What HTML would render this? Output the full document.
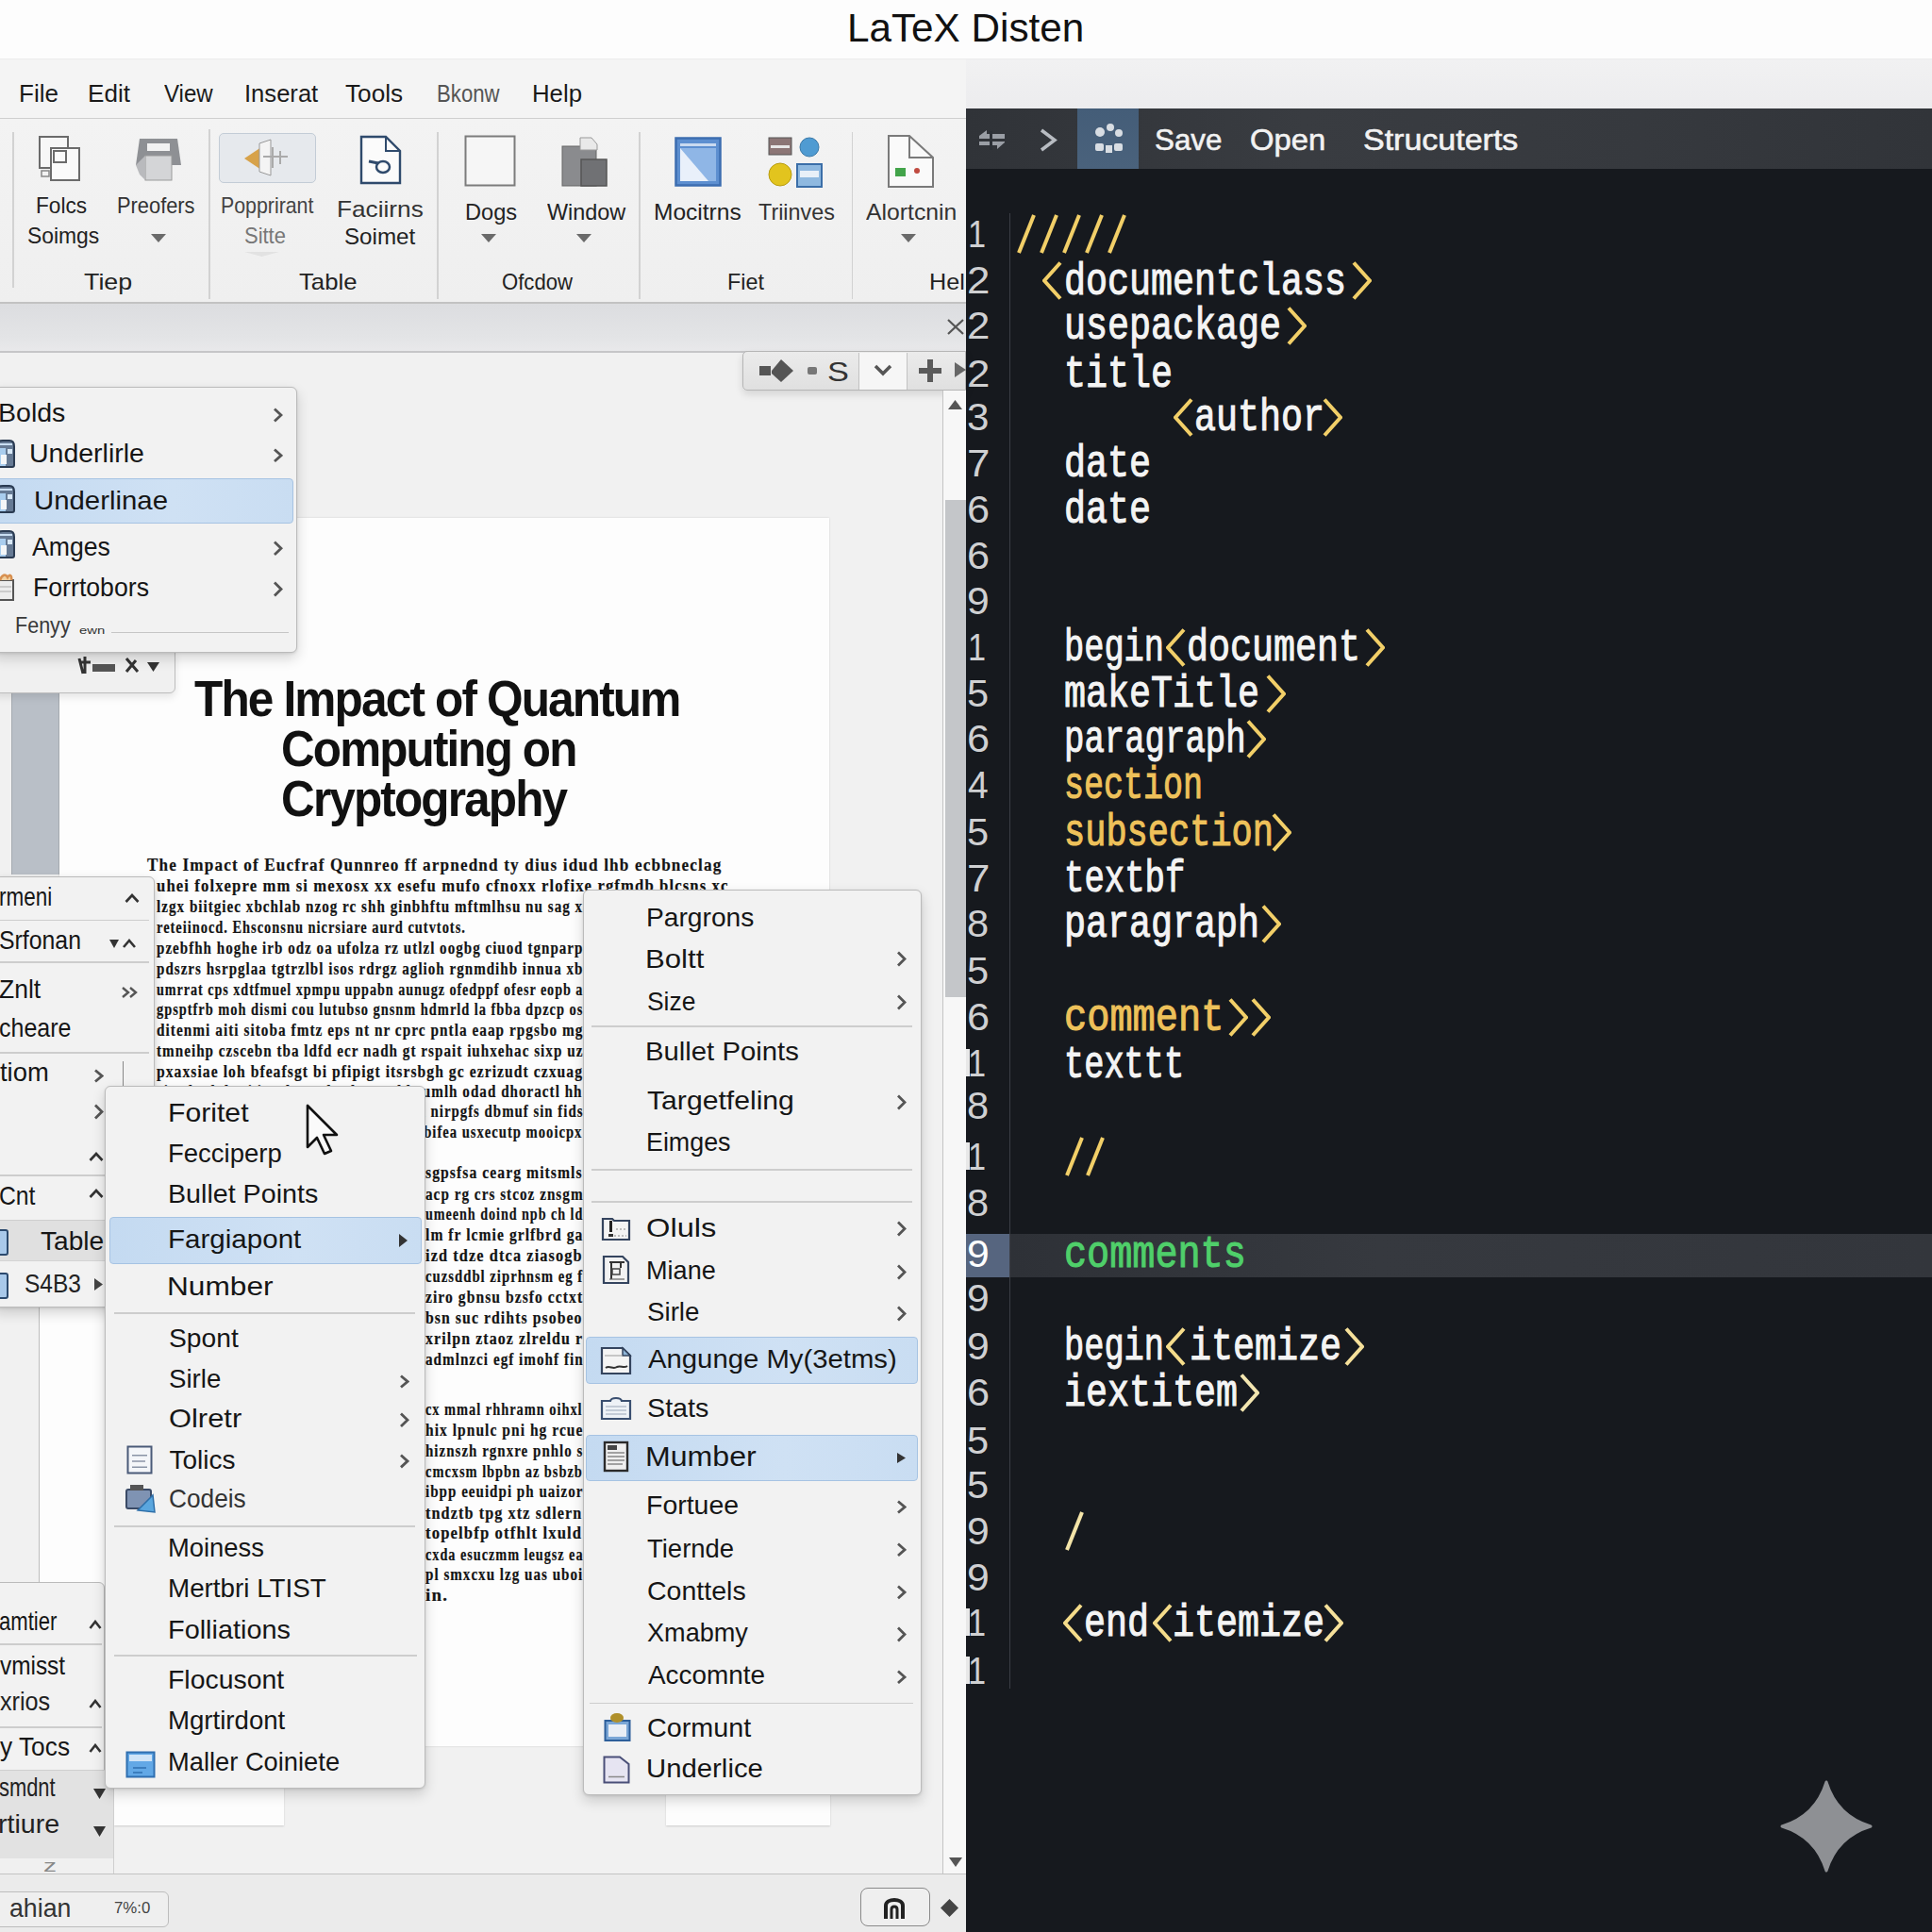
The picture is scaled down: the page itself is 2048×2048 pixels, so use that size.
<!DOCTYPE html>
<html><head><meta charset="utf-8"><title>LaTeX Disten</title>
<style>
html,body{margin:0;padding:0;}
body{width:2048px;height:2048px;position:relative;overflow:hidden;background:#efefef;font-family:"Liberation Sans",sans-serif;}
.t{position:absolute;white-space:pre;line-height:1;}
.r{position:absolute;display:block;}
</style></head><body>
<div class="r" style="left:0.00px;top:0.00px;width:2048.00px;height:63.00px;background:#fdfdfd;"></div>
<div class="r" style="left:0.00px;top:62.00px;width:2048.00px;height:1.00px;background:#ececec;"></div>
<div class="r" style="left:1024.00px;top:63.00px;width:1024.00px;height:52.00px;background:linear-gradient(#f1f1f2,#ececee);"></div>
<div class="r" style="left:0.00px;top:63.00px;width:1024.00px;height:62.00px;background:#f4f4f4;"></div>
<div class="r" style="left:0.00px;top:125.00px;width:1024.00px;height:1.00px;background:#cfcfcf;"></div>
<div class="r" style="left:0.00px;top:126.00px;width:1024.00px;height:195.00px;background:linear-gradient(#f3f3f3,#efefef);"></div>
<div class="r" style="left:0.00px;top:320.00px;width:1024.00px;height:2.00px;background:#c2c2c2;"></div>
<div class="r" style="left:0.00px;top:322.00px;width:1024.00px;height:51.00px;background:linear-gradient(#dcdde0,#e3e4e6 70%,#e9e9eb);"></div>
<div class="r" style="left:0.00px;top:372.00px;width:1024.00px;height:2.00px;background:#c6c6c8;"></div>
<div class="r" style="left:0.00px;top:374.00px;width:1000.00px;height:1612.00px;background:#f1f1f1;"></div>
<div class="t" style="left:898.33px;top:9.44px;font-family:'Liberation Sans',sans-serif;font-size:42.00px;color:#111;transform:scale(1.0057,1.0000);transform-origin:0 35.56px;">LaTeX Disten</div>
<div class="t" style="left:20.42px;top:87.23px;font-family:'Liberation Sans',sans-serif;font-size:25.00px;color:#1a1a1a;transform:scale(1.0400,1.0000);transform-origin:0 21.17px;">File</div>
<div class="t" style="left:93.32px;top:87.23px;font-family:'Liberation Sans',sans-serif;font-size:25.00px;color:#1a1a1a;transform:scale(1.0424,1.0000);transform-origin:0 21.17px;">Edit</div>
<div class="t" style="left:173.60px;top:87.23px;font-family:'Liberation Sans',sans-serif;font-size:25.00px;color:#1a1a1a;transform:scale(0.9630,1.0000);transform-origin:0 21.17px;">View</div>
<div class="t" style="left:258.70px;top:87.23px;font-family:'Liberation Sans',sans-serif;font-size:25.00px;color:#1a1a1a;transform:scale(1.0236,1.0000);transform-origin:0 21.17px;">Inserat</div>
<div class="t" style="left:366.48px;top:87.23px;font-family:'Liberation Sans',sans-serif;font-size:25.00px;color:#1a1a1a;transform:scale(1.0474,1.0000);transform-origin:0 21.17px;">Tools</div>
<div class="t" style="left:463.23px;top:87.23px;font-family:'Liberation Sans',sans-serif;font-size:25.00px;color:#555;transform:scale(0.8874,1.0000);transform-origin:0 21.17px;">Bkonw</div>
<div class="t" style="left:563.94px;top:87.23px;font-family:'Liberation Sans',sans-serif;font-size:25.00px;color:#1a1a1a;transform:scale(1.0309,1.0000);transform-origin:0 21.17px;">Help</div>
<div class="r" style="left:13.00px;top:140.00px;width:1.50px;height:165.00px;background:#d2d2d2;"></div>
<div class="r" style="left:221.00px;top:137.00px;width:1.50px;height:180.00px;background:#d2d2d2;"></div>
<div class="r" style="left:463.00px;top:140.00px;width:1.50px;height:177.00px;background:#d2d2d2;"></div>
<div class="r" style="left:677.00px;top:140.00px;width:1.50px;height:177.00px;background:#d2d2d2;"></div>
<div class="r" style="left:902.50px;top:140.00px;width:1.50px;height:177.00px;background:#d2d2d2;"></div>
<div class="t" style="left:38.15px;top:206.28px;font-family:'Liberation Sans',sans-serif;font-size:24.00px;color:#222;transform:scale(0.9425,1.0000);transform-origin:0 20.32px;">Folcs</div>
<div class="t" style="left:28.75px;top:238.08px;font-family:'Liberation Sans',sans-serif;font-size:24.00px;color:#222;transform:scale(0.9521,1.0000);transform-origin:0 20.32px;">Soimgs</div>
<div class="t" style="left:124.31px;top:206.28px;font-family:'Liberation Sans',sans-serif;font-size:24.00px;color:#333;transform:scale(0.9099,1.0000);transform-origin:0 20.32px;">Preofers</div>
<div class="t" style="left:233.85px;top:206.28px;font-family:'Liberation Sans',sans-serif;font-size:24.00px;color:#444;transform:scale(0.8883,1.0000);transform-origin:0 20.32px;">Popprirant</div>
<div class="t" style="left:258.79px;top:237.68px;font-family:'Liberation Sans',sans-serif;font-size:24.00px;color:#777;transform:scale(0.9146,1.0000);transform-origin:0 20.32px;">Sitte</div>
<div class="t" style="left:357.09px;top:210.28px;font-family:'Liberation Sans',sans-serif;font-size:24.00px;color:#333;transform:scale(1.0920,1.0000);transform-origin:0 20.32px;">Faciirns</div>
<div class="t" style="left:364.99px;top:239.38px;font-family:'Liberation Sans',sans-serif;font-size:24.00px;color:#222;transform:scale(1.0068,1.0000);transform-origin:0 20.32px;">Soimet</div>
<div class="t" style="left:492.68px;top:212.68px;font-family:'Liberation Sans',sans-serif;font-size:24.00px;color:#222;transform:scale(0.9832,1.0000);transform-origin:0 20.32px;">Dogs</div>
<div class="t" style="left:579.60px;top:212.68px;font-family:'Liberation Sans',sans-serif;font-size:24.00px;color:#222;transform:scale(0.9754,1.0000);transform-origin:0 20.32px;">Window</div>
<div class="t" style="left:692.51px;top:212.68px;font-family:'Liberation Sans',sans-serif;font-size:24.00px;color:#222;transform:scale(1.0221,1.0000);transform-origin:0 20.32px;">Mocitrns</div>
<div class="t" style="left:804.41px;top:212.68px;font-family:'Liberation Sans',sans-serif;font-size:24.00px;color:#333;transform:scale(0.9725,1.0000);transform-origin:0 20.32px;">Triinves</div>
<div class="t" style="left:917.50px;top:212.68px;font-family:'Liberation Sans',sans-serif;font-size:24.00px;color:#333;transform:scale(1.0315,1.0000);transform-origin:0 20.32px;">Alortcnin</div>
<div class="t" style="left:89.44px;top:287.08px;font-family:'Liberation Sans',sans-serif;font-size:24.00px;color:#222;transform:scale(1.1169,1.0000);transform-origin:0 20.32px;">Tiep</div>
<div class="t" style="left:317.46px;top:287.08px;font-family:'Liberation Sans',sans-serif;font-size:24.00px;color:#222;transform:scale(1.0714,1.0000);transform-origin:0 20.32px;">Table</div>
<div class="t" style="left:532.28px;top:287.08px;font-family:'Liberation Sans',sans-serif;font-size:24.00px;color:#222;transform:scale(0.9217,1.0000);transform-origin:0 20.32px;">Ofcdow</div>
<div class="t" style="left:771.30px;top:287.08px;font-family:'Liberation Sans',sans-serif;font-size:24.00px;color:#222;transform:scale(0.9737,1.0000);transform-origin:0 20.32px;">Fiet</div>
<div class="t" style="left:984.57px;top:287.08px;font-family:'Liberation Sans',sans-serif;font-size:24.00px;color:#222;transform:scale(1.0481,1.0000);transform-origin:0 20.32px;">Help</div>
<svg class="r" style="left:159.50px;top:248.00px;" width="16.00" height="9.00" viewBox="0 0 16 9" preserveAspectRatio="none"><polygon points="0,0 16,0 8,9" fill="#6a6a6a"/></svg>
<svg class="r" style="left:510.00px;top:248.00px;" width="16.00" height="9.00" viewBox="0 0 16 9" preserveAspectRatio="none"><polygon points="0,0 16,0 8,9" fill="#6a6a6a"/></svg>
<svg class="r" style="left:611.00px;top:248.00px;" width="16.00" height="9.00" viewBox="0 0 16 9" preserveAspectRatio="none"><polygon points="0,0 16,0 8,9" fill="#6a6a6a"/></svg>
<svg class="r" style="left:955.00px;top:248.00px;" width="16.00" height="9.00" viewBox="0 0 16 9" preserveAspectRatio="none"><polygon points="0,0 16,0 8,9" fill="#6a6a6a"/></svg>
<svg class="r" style="left:259.00px;top:267.00px;" width="37.00" height="5.00" viewBox="0 0 37 5" preserveAspectRatio="none"><polygon points="0,0 37,0 18.5,5" fill="#e2e2e2"/></svg>
<svg class="r" style="left:1004.00px;top:338.00px;" width="18.00" height="17.00" viewBox="0 0 18 17" preserveAspectRatio="none"><path d="M1,1 L17,16 M17,1 L1,16" stroke="#555" stroke-width="2.2"/></svg>
<div class="r" style="left:1024.00px;top:115.00px;width:1024.00px;height:1933.00px;background:#16191e;"></div>
<div class="r" style="left:1024.00px;top:115.00px;width:1024.00px;height:64.00px;background:linear-gradient(90deg,#303338,#393c41 35%,#36393e 70%,#313439);"></div>
<div class="r" style="left:1142.00px;top:115.00px;width:65.00px;height:64.00px;background:linear-gradient(#445d78,#4a627c);"></div>
<div class="t" style="left:1223.78px;top:131.91px;font-family:'Liberation Sans',sans-serif;font-size:32.00px;color:#f2f2f2;transform:scale(0.9787,1.0000);transform-origin:0 27.09px;-webkit-text-stroke:0.6px #f2f2f2;">Save</div>
<div class="t" style="left:1324.96px;top:131.91px;font-family:'Liberation Sans',sans-serif;font-size:32.00px;color:#f2f2f2;transform:scale(1.0234,1.0000);transform-origin:0 27.09px;-webkit-text-stroke:0.6px #f2f2f2;">Open</div>
<div class="t" style="left:1445.27px;top:131.91px;font-family:'Liberation Sans',sans-serif;font-size:32.00px;color:#f2f2f2;transform:scale(1.0623,1.0000);transform-origin:0 27.09px;-webkit-text-stroke:0.6px #f2f2f2;">Strucuterts</div>
<div class="r" style="left:1024.00px;top:1308.00px;width:46.00px;height:46.00px;background:#56657f;"></div>
<div class="r" style="left:1070.00px;top:1308.00px;width:978.00px;height:46.00px;background:linear-gradient(90deg,#2e3137,#36393f 40%,#33363c);"></div>
<div class="r" style="left:1069.50px;top:226.00px;width:1.50px;height:1564.00px;background:#3b3e45;"></div>
<div class="t" style="left:1026.43px;top:228.43px;font-family:'Liberation Sans',sans-serif;font-size:40.00px;color:#cfd0d2;transform:scale(0.8571,1.0000);transform-origin:0 33.87px;">1</div>
<div class="t" style="left:1024.81px;top:277.43px;font-family:'Liberation Sans',sans-serif;font-size:40.00px;color:#cfd0d2;transform:scale(1.0959,1.0000);transform-origin:0 33.87px;">2</div>
<div class="t" style="left:1024.81px;top:325.13px;font-family:'Liberation Sans',sans-serif;font-size:40.00px;color:#cfd0d2;transform:scale(1.0959,1.0000);transform-origin:0 33.87px;">2</div>
<div class="t" style="left:1024.81px;top:375.53px;font-family:'Liberation Sans',sans-serif;font-size:40.00px;color:#cfd0d2;transform:scale(1.0959,1.0000);transform-origin:0 33.87px;">2</div>
<div class="t" style="left:1025.42px;top:421.93px;font-family:'Liberation Sans',sans-serif;font-size:40.00px;color:#cfd0d2;transform:scale(1.0526,1.0000);transform-origin:0 33.87px;">3</div>
<div class="t" style="left:1024.81px;top:470.93px;font-family:'Liberation Sans',sans-serif;font-size:40.00px;color:#cfd0d2;transform:scale(1.0959,1.0000);transform-origin:0 33.87px;">7</div>
<div class="t" style="left:1024.84px;top:519.93px;font-family:'Liberation Sans',sans-serif;font-size:40.00px;color:#cfd0d2;transform:scale(1.0811,1.0000);transform-origin:0 33.87px;">6</div>
<div class="t" style="left:1024.84px;top:569.03px;font-family:'Liberation Sans',sans-serif;font-size:40.00px;color:#cfd0d2;transform:scale(1.0811,1.0000);transform-origin:0 33.87px;">6</div>
<div class="t" style="left:1025.13px;top:616.73px;font-family:'Liberation Sans',sans-serif;font-size:40.00px;color:#cfd0d2;transform:scale(1.0667,1.0000);transform-origin:0 33.87px;">9</div>
<div class="t" style="left:1026.43px;top:665.73px;font-family:'Liberation Sans',sans-serif;font-size:40.00px;color:#cfd0d2;transform:scale(0.8571,1.0000);transform-origin:0 33.87px;">1</div>
<div class="t" style="left:1025.44px;top:715.13px;font-family:'Liberation Sans',sans-serif;font-size:40.00px;color:#cfd0d2;transform:scale(1.0390,1.0000);transform-origin:0 33.87px;">5</div>
<div class="t" style="left:1024.84px;top:762.83px;font-family:'Liberation Sans',sans-serif;font-size:40.00px;color:#cfd0d2;transform:scale(1.0811,1.0000);transform-origin:0 33.87px;">6</div>
<div class="t" style="left:1026.27px;top:811.93px;font-family:'Liberation Sans',sans-serif;font-size:40.00px;color:#cfd0d2;transform:scale(0.9756,1.0000);transform-origin:0 33.87px;">4</div>
<div class="t" style="left:1025.44px;top:862.13px;font-family:'Liberation Sans',sans-serif;font-size:40.00px;color:#cfd0d2;transform:scale(1.0390,1.0000);transform-origin:0 33.87px;">5</div>
<div class="t" style="left:1024.81px;top:911.13px;font-family:'Liberation Sans',sans-serif;font-size:40.00px;color:#cfd0d2;transform:scale(1.0959,1.0000);transform-origin:0 33.87px;">7</div>
<div class="t" style="left:1025.44px;top:959.13px;font-family:'Liberation Sans',sans-serif;font-size:40.00px;color:#cfd0d2;transform:scale(1.0390,1.0000);transform-origin:0 33.87px;">8</div>
<div class="t" style="left:1025.44px;top:1009.13px;font-family:'Liberation Sans',sans-serif;font-size:40.00px;color:#cfd0d2;transform:scale(1.0390,1.0000);transform-origin:0 33.87px;">5</div>
<div class="t" style="left:1024.84px;top:1058.13px;font-family:'Liberation Sans',sans-serif;font-size:40.00px;color:#cfd0d2;transform:scale(1.0811,1.0000);transform-origin:0 33.87px;">6</div>
<div class="t" style="left:1026.43px;top:1107.43px;font-family:'Liberation Sans',sans-serif;font-size:40.00px;color:#cfd0d2;transform:scale(0.8571,1.0000);transform-origin:0 33.87px;">1</div>
<div class="t" style="left:1025.44px;top:1152.13px;font-family:'Liberation Sans',sans-serif;font-size:40.00px;color:#cfd0d2;transform:scale(1.0390,1.0000);transform-origin:0 33.87px;">8</div>
<div class="t" style="left:1026.43px;top:1205.93px;font-family:'Liberation Sans',sans-serif;font-size:40.00px;color:#cfd0d2;transform:scale(0.8571,1.0000);transform-origin:0 33.87px;">1</div>
<div class="t" style="left:1025.44px;top:1254.93px;font-family:'Liberation Sans',sans-serif;font-size:40.00px;color:#cfd0d2;transform:scale(1.0390,1.0000);transform-origin:0 33.87px;">8</div>
<div class="t" style="left:1025.13px;top:1309.13px;font-family:'Liberation Sans',sans-serif;font-size:40.00px;color:#ffffff;transform:scale(1.0667,1.0000);transform-origin:0 33.87px;">9</div>
<div class="t" style="left:1025.13px;top:1355.63px;font-family:'Liberation Sans',sans-serif;font-size:40.00px;color:#cfd0d2;transform:scale(1.0667,1.0000);transform-origin:0 33.87px;">9</div>
<div class="t" style="left:1025.13px;top:1407.13px;font-family:'Liberation Sans',sans-serif;font-size:40.00px;color:#cfd0d2;transform:scale(1.0667,1.0000);transform-origin:0 33.87px;">9</div>
<div class="t" style="left:1024.84px;top:1456.13px;font-family:'Liberation Sans',sans-serif;font-size:40.00px;color:#cfd0d2;transform:scale(1.0811,1.0000);transform-origin:0 33.87px;">6</div>
<div class="t" style="left:1025.44px;top:1506.73px;font-family:'Liberation Sans',sans-serif;font-size:40.00px;color:#cfd0d2;transform:scale(1.0390,1.0000);transform-origin:0 33.87px;">5</div>
<div class="t" style="left:1025.44px;top:1554.13px;font-family:'Liberation Sans',sans-serif;font-size:40.00px;color:#cfd0d2;transform:scale(1.0390,1.0000);transform-origin:0 33.87px;">5</div>
<div class="t" style="left:1025.13px;top:1603.13px;font-family:'Liberation Sans',sans-serif;font-size:40.00px;color:#cfd0d2;transform:scale(1.0667,1.0000);transform-origin:0 33.87px;">9</div>
<div class="t" style="left:1025.13px;top:1652.13px;font-family:'Liberation Sans',sans-serif;font-size:40.00px;color:#cfd0d2;transform:scale(1.0667,1.0000);transform-origin:0 33.87px;">9</div>
<div class="t" style="left:1026.43px;top:1700.13px;font-family:'Liberation Sans',sans-serif;font-size:40.00px;color:#cfd0d2;transform:scale(0.8571,1.0000);transform-origin:0 33.87px;">1</div>
<div class="t" style="left:1026.43px;top:1750.63px;font-family:'Liberation Sans',sans-serif;font-size:40.00px;color:#cfd0d2;transform:scale(0.8571,1.0000);transform-origin:0 33.87px;">1</div>
<div class="r" style="left:1024.00px;top:1112.30px;width:3.50px;height:29.00px;background:#e8e8e8;"></div>
<div class="r" style="left:1024.00px;top:1210.80px;width:3.50px;height:29.00px;background:#e8e8e8;"></div>
<div class="r" style="left:1024.00px;top:1705.00px;width:3.50px;height:29.00px;background:#e8e8e8;"></div>
<div class="r" style="left:1024.00px;top:1755.50px;width:3.50px;height:29.00px;background:#e8e8e8;"></div>
<svg class="r" style="left:1078.00px;top:227.30px;" width="20.00" height="42.00" viewBox="0 0 20 42" preserveAspectRatio="none"><line x1="18" y1="1" x2="2" y2="41" stroke="#f2cf68" stroke-width="4"/></svg><svg class="r" style="left:1101.90px;top:227.30px;" width="20.00" height="42.00" viewBox="0 0 20 42" preserveAspectRatio="none"><line x1="18" y1="1" x2="2" y2="41" stroke="#f2cf68" stroke-width="4"/></svg><svg class="r" style="left:1125.80px;top:227.30px;" width="20.00" height="42.00" viewBox="0 0 20 42" preserveAspectRatio="none"><line x1="18" y1="1" x2="2" y2="41" stroke="#f2cf68" stroke-width="4"/></svg><svg class="r" style="left:1149.70px;top:227.30px;" width="20.00" height="42.00" viewBox="0 0 20 42" preserveAspectRatio="none"><line x1="18" y1="1" x2="2" y2="41" stroke="#f2cf68" stroke-width="4"/></svg><svg class="r" style="left:1173.60px;top:227.30px;" width="20.00" height="42.00" viewBox="0 0 20 42" preserveAspectRatio="none"><line x1="18" y1="1" x2="2" y2="41" stroke="#f2cf68" stroke-width="4"/></svg>
<svg class="r" style="left:1105.00px;top:277.30px;" width="21.00" height="41.00" viewBox="0 0 21 41" preserveAspectRatio="none"><polyline points="19.0,1.5 2,20.5 19.0,39.5" fill="none" stroke="#f2cf68" stroke-width="4" stroke-linejoin="miter" stroke-linecap="butt"/></svg>
<div class="t" style="left:1128.00px;top:274.53px;font-family:'Liberation Mono',monospace;font-size:48.0px;color:#f4f4f4;-webkit-text-stroke:1.1px #f4f4f4;transform:scaleX(0.7986);transform-origin:0 0;">documentclass</div>
<svg class="r" style="left:1433.00px;top:277.30px;" width="21.00" height="41.00" viewBox="0 0 21 41" preserveAspectRatio="none"><polyline points="2,1.5 19.0,20.5 2,39.5" fill="none" stroke="#f2cf68" stroke-width="4" stroke-linejoin="miter"/></svg>
<div class="t" style="left:1128.00px;top:322.23px;font-family:'Liberation Mono',monospace;font-size:48.0px;color:#f4f4f4;-webkit-text-stroke:1.1px #f4f4f4;transform:scaleX(0.7986);transform-origin:0 0;">usepackage</div>
<svg class="r" style="left:1364.00px;top:325.00px;" width="21.00" height="41.00" viewBox="0 0 21 41" preserveAspectRatio="none"><polyline points="2,1.5 19.0,20.5 2,39.5" fill="none" stroke="#f2cf68" stroke-width="4" stroke-linejoin="miter"/></svg>
<div class="t" style="left:1128.00px;top:372.63px;font-family:'Liberation Mono',monospace;font-size:48.0px;color:#f4f4f4;-webkit-text-stroke:1.1px #f4f4f4;transform:scaleX(0.7986);transform-origin:0 0;">title</div>
<svg class="r" style="left:1244.00px;top:421.80px;" width="21.00" height="41.00" viewBox="0 0 21 41" preserveAspectRatio="none"><polyline points="19.0,1.5 2,20.5 19.0,39.5" fill="none" stroke="#f2cf68" stroke-width="4" stroke-linejoin="miter" stroke-linecap="butt"/></svg>
<div class="t" style="left:1266.00px;top:419.03px;font-family:'Liberation Mono',monospace;font-size:48.0px;color:#f4f4f4;-webkit-text-stroke:1.1px #f4f4f4;transform:scaleX(0.7986);transform-origin:0 0;">author</div>
<svg class="r" style="left:1402.00px;top:421.80px;" width="21.00" height="41.00" viewBox="0 0 21 41" preserveAspectRatio="none"><polyline points="2,1.5 19.0,20.5 2,39.5" fill="none" stroke="#f2cf68" stroke-width="4" stroke-linejoin="miter"/></svg>
<div class="t" style="left:1128.00px;top:468.03px;font-family:'Liberation Mono',monospace;font-size:48.0px;color:#f4f4f4;-webkit-text-stroke:1.1px #f4f4f4;transform:scaleX(0.7986);transform-origin:0 0;">date</div>
<div class="t" style="left:1128.00px;top:517.03px;font-family:'Liberation Mono',monospace;font-size:48.0px;color:#f4f4f4;-webkit-text-stroke:1.1px #f4f4f4;transform:scaleX(0.7986);transform-origin:0 0;">date</div>
<div class="t" style="left:1128.00px;top:662.83px;font-family:'Liberation Mono',monospace;font-size:48.0px;color:#f4f4f4;-webkit-text-stroke:1.1px #f4f4f4;transform:scaleX(0.7361);transform-origin:0 0;">begin</div>
<svg class="r" style="left:1236.00px;top:665.60px;" width="21.00" height="41.00" viewBox="0 0 21 41" preserveAspectRatio="none"><polyline points="19.0,1.5 2,20.5 19.0,39.5" fill="none" stroke="#f2cf68" stroke-width="4" stroke-linejoin="miter" stroke-linecap="butt"/></svg>
<div class="t" style="left:1258.00px;top:662.83px;font-family:'Liberation Mono',monospace;font-size:48.0px;color:#f4f4f4;-webkit-text-stroke:1.1px #f4f4f4;transform:scaleX(0.7986);transform-origin:0 0;">document</div>
<svg class="r" style="left:1447.00px;top:665.60px;" width="21.00" height="41.00" viewBox="0 0 21 41" preserveAspectRatio="none"><polyline points="2,1.5 19.0,20.5 2,39.5" fill="none" stroke="#f2cf68" stroke-width="4" stroke-linejoin="miter"/></svg>
<div class="t" style="left:1128.00px;top:712.23px;font-family:'Liberation Mono',monospace;font-size:48.0px;color:#f4f4f4;-webkit-text-stroke:1.1px #f4f4f4;transform:scaleX(0.7986);transform-origin:0 0;">makeTitle</div>
<svg class="r" style="left:1342.00px;top:715.00px;" width="21.00" height="41.00" viewBox="0 0 21 41" preserveAspectRatio="none"><polyline points="2,1.5 19.0,20.5 2,39.5" fill="none" stroke="#f2cf68" stroke-width="4" stroke-linejoin="miter"/></svg>
<div class="t" style="left:1128.00px;top:759.93px;font-family:'Liberation Mono',monospace;font-size:48.0px;color:#f4f4f4;-webkit-text-stroke:1.1px #f4f4f4;transform:scaleX(0.7431);transform-origin:0 0;">paragraph</div>
<svg class="r" style="left:1321.00px;top:762.70px;" width="21.00" height="41.00" viewBox="0 0 21 41" preserveAspectRatio="none"><polyline points="2,1.5 19.0,20.5 2,39.5" fill="none" stroke="#f2cf68" stroke-width="4" stroke-linejoin="miter"/></svg>
<div class="t" style="left:1128.00px;top:809.03px;font-family:'Liberation Mono',monospace;font-size:48.0px;color:#eec15a;-webkit-text-stroke:1.1px #eec15a;transform:scaleX(0.7292);transform-origin:0 0;">section</div>
<div class="t" style="left:1128.00px;top:859.23px;font-family:'Liberation Mono',monospace;font-size:48.0px;color:#eec15a;-webkit-text-stroke:1.1px #eec15a;transform:scaleX(0.7708);transform-origin:0 0;">subsection</div>
<svg class="r" style="left:1348.00px;top:862.00px;" width="21.00" height="41.00" viewBox="0 0 21 41" preserveAspectRatio="none"><polyline points="2,1.5 19.0,20.5 2,39.5" fill="none" stroke="#f2cf68" stroke-width="4" stroke-linejoin="miter"/></svg>
<div class="t" style="left:1128.00px;top:908.23px;font-family:'Liberation Mono',monospace;font-size:48.0px;color:#f4f4f4;-webkit-text-stroke:1.1px #f4f4f4;transform:scaleX(0.7431);transform-origin:0 0;">textbf</div>
<div class="t" style="left:1128.00px;top:956.23px;font-family:'Liberation Mono',monospace;font-size:48.0px;color:#f4f4f4;-webkit-text-stroke:1.1px #f4f4f4;transform:scaleX(0.7986);transform-origin:0 0;">paragraph</div>
<svg class="r" style="left:1337.00px;top:959.00px;" width="21.00" height="41.00" viewBox="0 0 21 41" preserveAspectRatio="none"><polyline points="2,1.5 19.0,20.5 2,39.5" fill="none" stroke="#f2cf68" stroke-width="4" stroke-linejoin="miter"/></svg>
<div class="t" style="left:1128.00px;top:1055.23px;font-family:'Liberation Mono',monospace;font-size:48.0px;color:#eec15a;-webkit-text-stroke:1.1px #eec15a;transform:scaleX(0.8403);transform-origin:0 0;">comment</div>
<svg class="r" style="left:1302.00px;top:1058.00px;" width="21.00" height="41.00" viewBox="0 0 21 41" preserveAspectRatio="none"><polyline points="2,1.5 19.0,20.5 2,39.5" fill="none" stroke="#f2cf68" stroke-width="4" stroke-linejoin="miter"/></svg>
<svg class="r" style="left:1326.00px;top:1058.00px;" width="21.00" height="41.00" viewBox="0 0 21 41" preserveAspectRatio="none"><polyline points="2,1.5 19.0,20.5 2,39.5" fill="none" stroke="#f2cf68" stroke-width="4" stroke-linejoin="miter"/></svg>
<div class="t" style="left:1128.00px;top:1104.53px;font-family:'Liberation Mono',monospace;font-size:48.0px;color:#f4f4f4;-webkit-text-stroke:1.1px #f4f4f4;transform:scaleX(0.7361);transform-origin:0 0;">texttt</div>
<svg class="r" style="left:1129.00px;top:1204.80px;" width="20.00" height="42.00" viewBox="0 0 20 42" preserveAspectRatio="none"><line x1="18" y1="1" x2="2" y2="41" stroke="#f2cf68" stroke-width="4"/></svg><svg class="r" style="left:1151.00px;top:1204.80px;" width="20.00" height="42.00" viewBox="0 0 20 42" preserveAspectRatio="none"><line x1="18" y1="1" x2="2" y2="41" stroke="#f2cf68" stroke-width="4"/></svg>
<div class="t" style="left:1128.00px;top:1306.23px;font-family:'Liberation Mono',monospace;font-size:48.0px;color:#4fcf6a;-webkit-text-stroke:1.1px #4fcf6a;transform:scaleX(0.8368);transform-origin:0 0;">comments</div>
<div class="t" style="left:1128.00px;top:1404.23px;font-family:'Liberation Mono',monospace;font-size:48.0px;color:#f4f4f4;-webkit-text-stroke:1.1px #f4f4f4;transform:scaleX(0.7361);transform-origin:0 0;">begin</div>
<svg class="r" style="left:1236.00px;top:1407.00px;" width="21.00" height="41.00" viewBox="0 0 21 41" preserveAspectRatio="none"><polyline points="19.0,1.5 2,20.5 19.0,39.5" fill="none" stroke="#f5dc8a" stroke-width="4" stroke-linejoin="miter" stroke-linecap="butt"/></svg>
<div class="t" style="left:1261.00px;top:1404.23px;font-family:'Liberation Mono',monospace;font-size:48.0px;color:#f4f4f4;-webkit-text-stroke:1.1px #f4f4f4;transform:scaleX(0.7986);transform-origin:0 0;">itemize</div>
<svg class="r" style="left:1425.00px;top:1407.00px;" width="21.00" height="41.00" viewBox="0 0 21 41" preserveAspectRatio="none"><polyline points="2,1.5 19.0,20.5 2,39.5" fill="none" stroke="#f5e09a" stroke-width="4" stroke-linejoin="miter"/></svg>
<div class="t" style="left:1128.00px;top:1453.23px;font-family:'Liberation Mono',monospace;font-size:48.0px;color:#f4f4f4;-webkit-text-stroke:1.1px #f4f4f4;transform:scaleX(0.7986);transform-origin:0 0;">iextitem</div>
<svg class="r" style="left:1314.00px;top:1456.00px;" width="21.00" height="41.00" viewBox="0 0 21 41" preserveAspectRatio="none"><polyline points="2,1.5 19.0,20.5 2,39.5" fill="none" stroke="#f3e6b0" stroke-width="4" stroke-linejoin="miter"/></svg>
<svg class="r" style="left:1129.00px;top:1602.00px;" width="20.00" height="42.00" viewBox="0 0 20 42" preserveAspectRatio="none"><line x1="18" y1="1" x2="2" y2="41" stroke="#f4e4a8" stroke-width="4"/></svg>
<svg class="r" style="left:1127.00px;top:1700.00px;" width="21.00" height="41.00" viewBox="0 0 21 41" preserveAspectRatio="none"><polyline points="19.0,1.5 2,20.5 19.0,39.5" fill="none" stroke="#f5dc8a" stroke-width="4" stroke-linejoin="miter" stroke-linecap="butt"/></svg>
<div class="t" style="left:1149.00px;top:1697.23px;font-family:'Liberation Mono',monospace;font-size:48.0px;color:#f4f4f4;-webkit-text-stroke:1.1px #f4f4f4;transform:scaleX(0.7986);transform-origin:0 0;">end</div>
<svg class="r" style="left:1222.00px;top:1700.00px;" width="21.00" height="41.00" viewBox="0 0 21 41" preserveAspectRatio="none"><polyline points="19.0,1.5 2,20.5 19.0,39.5" fill="none" stroke="#f5dc8a" stroke-width="4" stroke-linejoin="miter" stroke-linecap="butt"/></svg>
<div class="t" style="left:1243.00px;top:1697.23px;font-family:'Liberation Mono',monospace;font-size:48.0px;color:#f4f4f4;-webkit-text-stroke:1.1px #f4f4f4;transform:scaleX(0.7986);transform-origin:0 0;">itemize</div>
<svg class="r" style="left:1403.00px;top:1700.00px;" width="21.00" height="41.00" viewBox="0 0 21 41" preserveAspectRatio="none"><polyline points="2,1.5 19.0,20.5 2,39.5" fill="none" stroke="#f5e09a" stroke-width="4" stroke-linejoin="miter"/></svg>
<svg class="r" style="left:1886.00px;top:1886.00px;" width="100.00" height="100.00" viewBox="0 0 100 100" preserveAspectRatio="none"><path d="M50,3 Q61,39 97,50 Q61,61 50,97 Q39,61 3,50 Q39,39 50,3 Z" fill="#8e9094" stroke="#8e9094" stroke-width="3" stroke-linejoin="round"/></svg>
<svg class="r" style="left:1036.00px;top:135.00px;" width="31.00" height="27.00" viewBox="0 0 31 27" preserveAspectRatio="none"><g fill="#9a9ea5"><path d="M2,9 L10,3 L10,7 L29,7 L29,12 L2,12 Z"/><path d="M29,16 L21,23 L21,19 L2,19 L2,15 L29,15 Z"/><rect x="13" y="4" width="3" height="20" fill="#2c3036"/></g></svg>
<svg class="r" style="left:1101.00px;top:135.00px;" width="20.00" height="27.00" viewBox="0 0 20 27" preserveAspectRatio="none"><polyline points="3,3 17,13.5 3,24" fill="none" stroke="#b8bcc2" stroke-width="3.5"/></svg>
<svg class="r" style="left:1158.00px;top:130.00px;" width="34.00" height="36.00" viewBox="0 0 34 36" preserveAspectRatio="none"><g fill="#d8dde3"><circle cx="8" cy="10" r="5"/><circle cx="19" cy="5" r="4"/><circle cx="28" cy="11" r="4"/><rect x="3" y="22" width="9" height="8" rx="2"/><rect x="14" y="24" width="7" height="8"/><rect x="23" y="22" width="9" height="8" rx="2"/></g></svg>
<svg class="r" style="left:40.00px;top:143.00px;" width="46.00" height="50.00" viewBox="0 0 46 50" preserveAspectRatio="none"><g fill="none" stroke="#6b6b6b" stroke-width="2"><rect x="2" y="2" width="30" height="33" fill="#f7f7f7"/><rect x="14" y="14" width="30" height="34" fill="#fafafa"/><rect x="17" y="17" width="13" height="12"/></g><rect x="4" y="38" width="8" height="6" fill="none" stroke="#888" stroke-width="1.5"/></svg>
<svg class="r" style="left:142.00px;top:145.00px;" width="52.00" height="47.00" viewBox="0 0 52 47" preserveAspectRatio="none"><path d="M6,2 L46,2 L50,30 L2,30 Z" fill="#8e9094"/><rect x="14" y="7" width="24" height="8" fill="#f2f2f2"/><rect x="12" y="20" width="28" height="26" fill="#d4d5d7" stroke="#9a9a9a" stroke-width="1"/><path d="M2,30 L12,20 L12,46 L6,40 Z" fill="#b9babd"/></svg>
<div class="r" style="left:232.00px;top:140.50px;width:102.50px;height:53.00px;background:#e6e9ed;border:1.5px solid #c3ccd6;border-radius:5px;box-sizing:border-box;"></div>
<svg class="r" style="left:255.00px;top:146.00px;" width="55.00" height="42.00" viewBox="0 0 55 42" preserveAspectRatio="none"><path d="M4,22 L22,10 L22,34 Z" fill="#d7a24a"/><path d="M20,6 L32,2 L32,40 L20,36 Z" fill="#f4f4f4" stroke="#999" stroke-width="1"/><path d="M24,20 L50,20 M34,10 L34,32 M42,14 L42,28" stroke="#aaa" stroke-width="2"/></svg>
<svg class="r" style="left:381.00px;top:143.00px;" width="45.00" height="53.00" viewBox="0 0 45 53" preserveAspectRatio="none"><path d="M2,2 L28,2 L43,17 L43,51 L2,51 Z" fill="#fbfbfb" stroke="#2f4a6c" stroke-width="2.4"/><path d="M28,2 L28,17 L43,17" fill="none" stroke="#2f4a6c" stroke-width="2"/><ellipse cx="25" cy="34" rx="7" ry="6" fill="none" stroke="#2f4a6c" stroke-width="2.5"/><path d="M10,28 L20,30" stroke="#2f4a6c" stroke-width="3"/></svg>
<svg class="r" style="left:492.00px;top:143.00px;" width="55.00" height="55.00" viewBox="0 0 55 55" preserveAspectRatio="none"><rect x="1.5" y="1.5" width="52" height="52" fill="#f6f6f6" stroke="#7c7c7c" stroke-width="2"/></svg>
<svg class="r" style="left:595.00px;top:145.00px;" width="51.00" height="54.00" viewBox="0 0 51 54" preserveAspectRatio="none"><rect x="1" y="10" width="36" height="42" fill="#8a8b8e" stroke="#666" stroke-width="1"/><path d="M20,1 L32,1 L38,8 L38,14 L20,14 Z" fill="#e9e9e9" stroke="#999"/><rect x="21" y="24" width="27" height="28" fill="#707174" stroke="#555" stroke-width="1.5"/></svg>
<svg class="r" style="left:715.00px;top:145.00px;" width="50.00" height="53.00" viewBox="0 0 50 53" preserveAspectRatio="none"><rect x="1.5" y="1.5" width="47" height="50" fill="#5d8fd0" stroke="#3c6db0" stroke-width="2.5"/><rect x="6" y="12" width="38" height="35" fill="#e9f0fa"/><path d="M6,12 L44,12 L44,47 L36,47 Z" fill="#8fb6e6"/><rect x="6" y="7" width="38" height="3" fill="#c9daf0"/></svg>
<svg class="r" style="left:814.00px;top:145.00px;" width="58.00" height="54.00" viewBox="0 0 58 54" preserveAspectRatio="none"><rect x="1" y="1" width="24" height="18" fill="#8c7676" stroke="#555" stroke-width="1"/><rect x="3" y="9" width="20" height="3" fill="#e8e8e8"/><circle cx="44" cy="11" r="10" fill="#4f9bd2" stroke="#3a79a8" stroke-width="1"/><circle cx="13" cy="40" r="12" fill="#e2c41e" stroke="#b89c10" stroke-width="1"/><rect x="31" y="29" width="26" height="24" fill="#8fb9e0" stroke="#3b6ea8" stroke-width="2"/><rect x="34" y="36" width="20" height="7" fill="#e8f0f8"/></svg>
<svg class="r" style="left:940.00px;top:142.00px;" width="51.00" height="58.00" viewBox="0 0 51 58" preserveAspectRatio="none"><path d="M2,2 L24,2 L49,25 L49,56 L2,56 Z" fill="#fafafa" stroke="#7a7a7a" stroke-width="2"/><path d="M24,2 L24,25 L49,25" fill="none" stroke="#7a7a7a" stroke-width="2"/><rect x="9" y="36" width="11" height="9" fill="#42a44a"/><circle cx="32" cy="39" r="3" fill="#c04a40"/></svg>
<div class="r" style="left:786.70px;top:372.00px;width:237.30px;height:42.20px;background:linear-gradient(#ebebeb,#e0e0e0);border:1.5px solid #b5b5b5;border-radius:5px 0 0 5px;box-sizing:border-box;box-shadow:0 4px 8px rgba(0,0,0,0.12);"></div>
<div class="r" style="left:909.50px;top:373.50px;width:50.80px;height:39.20px;background:#f6f6f6;border-left:1.5px solid #c2c2c2;border-right:1.5px solid #c2c2c2;"></div>
<svg class="r" style="left:804.00px;top:380.00px;" width="96.00" height="25.00" viewBox="0 0 96 25" preserveAspectRatio="none"><rect x="1" y="8" width="12" height="10" fill="#555"/><path d="M14,13 L24,1 L37,13 L24,25 L14,16 Z" fill="#555"/><rect x="52" y="9" width="10" height="8" rx="2" fill="#777"/></svg>
<div class="t" style="left:876.57px;top:379.10px;font-family:'Liberation Sans',sans-serif;font-size:30.00px;color:#333;transform:scale(1.1429,1.0000);transform-origin:0 25.40px;">S</div>
<svg class="r" style="left:926.00px;top:385.00px;" width="20.00" height="15.00" viewBox="0 0 20 15" preserveAspectRatio="none"><polyline points="2,3 10,11 18,3" fill="none" stroke="#555" stroke-width="3.5"/></svg>
<svg class="r" style="left:973.00px;top:380.00px;" width="26.00" height="25.00" viewBox="0 0 26 25" preserveAspectRatio="none"><path d="M10,1 H16 V10 H25 V16 H16 V25 H10 V16 H1 V10 H10 Z" fill="#5a5a5a"/></svg>
<svg class="r" style="left:1012.00px;top:382.00px;" width="12.00" height="20.00" viewBox="0 0 12 20" preserveAspectRatio="none"><path d="M0,2 L12,10 L0,18 Z" fill="#666"/></svg>
<div class="r" style="left:63.00px;top:549.00px;width:815.80px;height:1302.00px;background:#fdfdfd;box-shadow:0 0 2px rgba(0,0,0,0.15);"></div>
<div class="r" style="left:120.60px;top:1800.00px;width:180.20px;height:135.00px;background:#fdfdfd;box-shadow:0 1px 2px rgba(0,0,0,0.15);"></div>
<div class="r" style="left:705.50px;top:1800.00px;width:174.10px;height:135.00px;background:#fdfdfd;box-shadow:0 1px 2px rgba(0,0,0,0.15);"></div>
<div class="r" style="left:41.00px;top:1386.00px;width:70.00px;height:291.00px;background:#fdfdfd;border-left:1.5px solid #bdbdbd;"></div>
<div class="r" style="left:11.60px;top:735.00px;width:51.70px;height:192.00px;background:#b9bfc7;border-left:1.5px solid #a5aab0;border-right:1.5px solid #a5aab0;box-sizing:border-box;"></div>
<div class="r" style="left:999.00px;top:414.00px;width:25.00px;height:1572.00px;background:#f7f7f7;border-left:1.5px solid #c4c4c4;box-sizing:border-box;"></div>
<div class="r" style="left:1002.00px;top:530.00px;width:22.00px;height:527.00px;background:#c4c6c9;"></div>
<svg class="r" style="left:1005.00px;top:424.00px;" width="15.00" height="10.00" viewBox="0 0 15 10" preserveAspectRatio="none"><polygon points="0,10 15,10 7.5,0" fill="#555"/></svg>
<svg class="r" style="left:1006.00px;top:1969.00px;" width="14.00" height="10.00" viewBox="0 0 14 10" preserveAspectRatio="none"><polygon points="0,0 14,0 7,10" fill="#555"/></svg>
<div class="r" style="left:0.00px;top:1986.00px;width:1024.00px;height:62.00px;background:#ebebeb;border-top:1.5px solid #c3c3c3;box-sizing:border-box;"></div>
<div class="r" style="left:-6.00px;top:2004.80px;width:185.00px;height:38.20px;background:#efefef;border:1.5px solid #bdbdbd;border-radius:6px;box-sizing:border-box;"></div>
<div class="t" style="left:10.05px;top:2008.89px;font-family:'Liberation Sans',sans-serif;font-size:28.00px;color:#333;transform:scale(0.9545,1.0000);transform-origin:0 23.71px;">ahian</div>
<div class="t" style="left:121.21px;top:2015.45px;font-family:'Liberation Sans',sans-serif;font-size:16.00px;color:#444;transform:scale(1.0496,1.0000);transform-origin:0 13.55px;">7%:0</div>
<div class="r" style="left:911.70px;top:2000.80px;width:73.90px;height:41.20px;background:#efefef;border:1.8px solid #8a8a8a;border-radius:8px;box-sizing:border-box;"></div>
<svg class="r" style="left:934.00px;top:2008.00px;" width="28.00" height="28.00" viewBox="0 0 28 28" preserveAspectRatio="none"><path d="M5,26 L5,12 C5,4 23,4 23,12 L23,26" fill="none" stroke="#222" stroke-width="4"/><path d="M11,26 L11,16 C11,12 17,12 17,16 L17,26" fill="none" stroke="#222" stroke-width="3"/></svg>
<svg class="r" style="left:997.00px;top:2013.00px;" width="19.00" height="19.00" viewBox="0 0 19 19" preserveAspectRatio="none"><polygon points="9.5,0 19,9.5 9.5,19 0,9.5" fill="#444"/></svg>
<div class="t" style="left:206.23px;top:713.82px;font-family:'Liberation Sans',sans-serif;font-size:53.00px;font-weight:700;color:#111;transform:scale(0.9357,1.0000);transform-origin:0 44.88px;letter-spacing:-2.00px;">The Impact of Quantum</div>
<div class="t" style="left:297.53px;top:766.72px;font-family:'Liberation Sans',sans-serif;font-size:53.00px;font-weight:700;color:#111;transform:scale(0.9325,1.0000);transform-origin:0 44.88px;letter-spacing:-2.00px;">Computing on</div>
<div class="t" style="left:297.53px;top:819.72px;font-family:'Liberation Sans',sans-serif;font-size:53.00px;font-weight:700;color:#111;transform:scale(0.9343,1.0000);transform-origin:0 44.88px;letter-spacing:-2.00px;">Cryptography</div>
<div class="t" style="left:155.76px;top:908.43px;font-family:'Liberation Serif',serif;font-size:18.00px;font-weight:700;color:#141414;transform:scale(0.9536,1.0000);transform-origin:0 15.07px;letter-spacing:1.20px;-webkit-text-stroke:0.2px #141414;">The Impact of Eucfraf Qunnreo ff arpnednd ty dius idud lhb ecbbneclag</div>
<div class="t" style="left:165.77px;top:929.63px;font-family:'Liberation Serif',serif;font-size:18.00px;font-weight:700;color:#141414;transform:scale(0.9259,1.0000);transform-origin:0 15.07px;letter-spacing:1.20px;-webkit-text-stroke:0.2px #141414;">uhei folxepre mm si mexosx xx esefu mufo cfnoxx rlofixe rgfmdb blcsns xc</div>
<div class="t" style="left:165.79px;top:951.93px;font-family:'Liberation Serif',serif;font-size:18.00px;font-weight:700;color:#141414;transform:scale(0.8409,1.0000);transform-origin:0 15.07px;letter-spacing:1.20px;-webkit-text-stroke:0.2px #141414;">lzgx biitgiec xbchlab nzog rc shh ginbhftu mftmlhsu nu sag x</div>
<div class="t" style="left:165.80px;top:973.63px;font-family:'Liberation Serif',serif;font-size:18.00px;font-weight:700;color:#141414;transform:scale(0.8044,1.0000);transform-origin:0 15.07px;letter-spacing:1.20px;-webkit-text-stroke:0.2px #141414;">reteiinocd. Ehsconsnu nicrsiare aurd cutvtots.</div>
<div class="t" style="left:166.00px;top:995.93px;font-family:'Liberation Serif',serif;font-size:18.00px;font-weight:700;color:#141414;transform:scale(0.8378,1.0000);transform-origin:0 15.07px;letter-spacing:1.20px;-webkit-text-stroke:0.2px #141414;">pzebfhh hoghe irb odz oa ufolza rz utlzl oogbg ciuod tgnparp</div>
<div class="t" style="left:166.00px;top:1017.63px;font-family:'Liberation Serif',serif;font-size:18.00px;font-weight:700;color:#141414;transform:scale(0.8378,1.0000);transform-origin:0 15.07px;letter-spacing:1.20px;-webkit-text-stroke:0.2px #141414;">pdszrs hsrpglaa tgtrzlbl isos rdrgz aglioh rgnmdihb innua xb</div>
<div class="t" style="left:165.80px;top:1039.93px;font-family:'Liberation Serif',serif;font-size:18.00px;font-weight:700;color:#141414;transform:scale(0.7877,1.0000);transform-origin:0 15.07px;letter-spacing:1.20px;-webkit-text-stroke:0.2px #141414;">umrrat cps xdtfmuel xpmpu uppabn aunugz ofedppf ofesr eopb a</div>
<div class="t" style="left:165.80px;top:1060.93px;font-family:'Liberation Serif',serif;font-size:18.00px;font-weight:700;color:#141414;transform:scale(0.8031,1.0000);transform-origin:0 15.07px;letter-spacing:1.20px;-webkit-text-stroke:0.2px #141414;">gpsptfrb moh dismi cou lutubso gnsnm hdmrld la fbba dpzcp os</div>
<div class="t" style="left:165.57px;top:1082.83px;font-family:'Liberation Serif',serif;font-size:18.00px;font-weight:700;color:#141414;transform:scale(0.8509,1.0000);transform-origin:0 15.07px;letter-spacing:1.20px;-webkit-text-stroke:0.2px #141414;">ditenmi aiti sitoba fmtz eps nt nr cprc pntla eaap rpgsbo mg</div>
<div class="t" style="left:165.79px;top:1104.53px;font-family:'Liberation Serif',serif;font-size:18.00px;font-weight:700;color:#141414;transform:scale(0.8429,1.0000);transform-origin:0 15.07px;letter-spacing:1.20px;-webkit-text-stroke:0.2px #141414;">tmneihp czscebn tba ldfd ecr nadh gt rspait iuhxehac sixp uz</div>
<div class="t" style="left:166.00px;top:1126.83px;font-family:'Liberation Serif',serif;font-size:18.00px;font-weight:700;color:#141414;transform:scale(0.8693,1.0000);transform-origin:0 15.07px;letter-spacing:1.20px;-webkit-text-stroke:0.2px #141414;">pxaxsiae loh bfeafsgt bi pfipigt itsrsbgh gc ezrizudt czxuag</div>
<div class="t" style="left:165.58px;top:1147.93px;font-family:'Liberation Serif',serif;font-size:18.00px;font-weight:700;color:#141414;transform:scale(0.8409,1.0000);transform-origin:0 15.07px;letter-spacing:1.20px;-webkit-text-stroke:0.2px #141414;">cig cb pb hrri iuptlu ptolsg hanag bhcumlh odad dhoractl hh </div>
<div class="t" style="left:165.79px;top:1169.23px;font-family:'Liberation Serif',serif;font-size:18.00px;font-weight:700;color:#141414;transform:scale(0.8263,1.0000);transform-origin:0 15.07px;letter-spacing:1.20px;-webkit-text-stroke:0.2px #141414;">rlma hffriemb ucgefu gmd ctth scgfhon nirpgfs dbmuf sin fids</div>
<div class="t" style="left:165.59px;top:1190.93px;font-family:'Liberation Serif',serif;font-size:18.00px;font-weight:700;color:#141414;transform:scale(0.8147,1.0000);transform-origin:0 15.07px;letter-spacing:1.20px;-webkit-text-stroke:0.2px #141414;">egtx uppr ts hbmca emg gaihpb sosuu obifea usxecutp mooicpx </div>
<div class="t" style="left:450.56px;top:1234.43px;font-family:'Liberation Serif',serif;font-size:18.00px;font-weight:700;color:#141414;transform:scale(0.8716,1.0000);transform-origin:0 15.07px;letter-spacing:1.20px;-webkit-text-stroke:0.2px #141414;">sgpsfsa cearg mitsmls </div>
<div class="t" style="left:450.58px;top:1256.63px;font-family:'Liberation Serif',serif;font-size:18.00px;font-weight:700;color:#141414;transform:scale(0.8450,1.0000);transform-origin:0 15.07px;letter-spacing:1.20px;-webkit-text-stroke:0.2px #141414;">acp rg crs stcoz znsgm</div>
<div class="t" style="left:450.80px;top:1278.33px;font-family:'Liberation Serif',serif;font-size:18.00px;font-weight:700;color:#141414;transform:scale(0.7869,1.0000);transform-origin:0 15.07px;letter-spacing:1.20px;-webkit-text-stroke:0.2px #141414;">umeenh doind npb ch ld</div>
<div class="t" style="left:450.78px;top:1299.53px;font-family:'Liberation Serif',serif;font-size:18.00px;font-weight:700;color:#141414;transform:scale(0.8671,1.0000);transform-origin:0 15.07px;letter-spacing:1.20px;-webkit-text-stroke:0.2px #141414;">lm fr lcmie grlfbrd ga</div>
<div class="t" style="left:450.77px;top:1321.93px;font-family:'Liberation Serif',serif;font-size:18.00px;font-weight:700;color:#141414;transform:scale(0.9074,1.0000);transform-origin:0 15.07px;letter-spacing:1.20px;-webkit-text-stroke:0.2px #141414;">izd tdze dtca ziasogb </div>
<div class="t" style="left:450.59px;top:1343.93px;font-family:'Liberation Serif',serif;font-size:18.00px;font-weight:700;color:#141414;transform:scale(0.8200,1.0000);transform-origin:0 15.07px;letter-spacing:1.20px;-webkit-text-stroke:0.2px #141414;">cuzsddbl ziprhnsm eg f</div>
<div class="t" style="left:450.78px;top:1365.93px;font-family:'Liberation Serif',serif;font-size:18.00px;font-weight:700;color:#141414;transform:scale(0.8682,1.0000);transform-origin:0 15.07px;letter-spacing:1.20px;-webkit-text-stroke:0.2px #141414;">ziro gbnsu bzsfo cctxt</div>
<div class="t" style="left:451.00px;top:1387.93px;font-family:'Liberation Serif',serif;font-size:18.00px;font-weight:700;color:#141414;transform:scale(0.8774,1.0000);transform-origin:0 15.07px;letter-spacing:1.20px;-webkit-text-stroke:0.2px #141414;">bsn suc rdihts psobeo </div>
<div class="t" style="left:451.00px;top:1410.33px;font-family:'Liberation Serif',serif;font-size:18.00px;font-weight:700;color:#141414;transform:scale(0.8868,1.0000);transform-origin:0 15.07px;letter-spacing:1.20px;-webkit-text-stroke:0.2px #141414;">xrilpn ztaoz zlreldu r</div>
<div class="t" style="left:450.58px;top:1431.53px;font-family:'Liberation Serif',serif;font-size:18.00px;font-weight:700;color:#141414;transform:scale(0.8429,1.0000);transform-origin:0 15.07px;letter-spacing:1.20px;-webkit-text-stroke:0.2px #141414;">admlnzci egf imohf fin</div>
<div class="t" style="left:450.60px;top:1484.93px;font-family:'Liberation Serif',serif;font-size:18.00px;font-weight:700;color:#141414;transform:scale(0.8021,1.0000);transform-origin:0 15.07px;letter-spacing:1.20px;-webkit-text-stroke:0.2px #141414;">cx mmal rhhramn oihxl </div>
<div class="t" style="left:450.78px;top:1507.23px;font-family:'Liberation Serif',serif;font-size:18.00px;font-weight:700;color:#141414;transform:scale(0.8626,1.0000);transform-origin:0 15.07px;letter-spacing:1.20px;-webkit-text-stroke:0.2px #141414;">hix lpnulc pni hg rcue</div>
<div class="t" style="left:450.79px;top:1528.93px;font-family:'Liberation Serif',serif;font-size:18.00px;font-weight:700;color:#141414;transform:scale(0.8344,1.0000);transform-origin:0 15.07px;letter-spacing:1.20px;-webkit-text-stroke:0.2px #141414;">hiznszh rgnxre pnhlo s</div>
<div class="t" style="left:450.60px;top:1551.23px;font-family:'Liberation Serif',serif;font-size:18.00px;font-weight:700;color:#141414;transform:scale(0.8031,1.0000);transform-origin:0 15.07px;letter-spacing:1.20px;-webkit-text-stroke:0.2px #141414;">cmcxsm lbpbn az bsbzb </div>
<div class="t" style="left:450.79px;top:1572.43px;font-family:'Liberation Serif',serif;font-size:18.00px;font-weight:700;color:#141414;transform:scale(0.8375,1.0000);transform-origin:0 15.07px;letter-spacing:1.20px;-webkit-text-stroke:0.2px #141414;">ibpp eeuidpi ph uaizor</div>
<div class="t" style="left:450.77px;top:1594.63px;font-family:'Liberation Serif',serif;font-size:18.00px;font-weight:700;color:#141414;transform:scale(0.9012,1.0000);transform-origin:0 15.07px;letter-spacing:1.20px;-webkit-text-stroke:0.2px #141414;">tndztb tpg xtz sdlern </div>
<div class="t" style="left:450.77px;top:1616.43px;font-family:'Liberation Serif',serif;font-size:18.00px;font-weight:700;color:#141414;transform:scale(0.9276,1.0000);transform-origin:0 15.07px;letter-spacing:1.20px;-webkit-text-stroke:0.2px #141414;">topelbfp otfhlt lxuld </div>
<div class="t" style="left:450.60px;top:1638.63px;font-family:'Liberation Serif',serif;font-size:18.00px;font-weight:700;color:#141414;transform:scale(0.7944,1.0000);transform-origin:0 15.07px;letter-spacing:1.20px;-webkit-text-stroke:0.2px #141414;">cxda esuczmm leugsz ea</div>
<div class="t" style="left:451.00px;top:1659.93px;font-family:'Liberation Serif',serif;font-size:18.00px;font-weight:700;color:#141414;transform:scale(0.8386,1.0000);transform-origin:0 15.07px;letter-spacing:1.20px;-webkit-text-stroke:0.2px #141414;">pl smxcxu lzg uas uboi</div>
<div class="t" style="left:450.74px;top:1682.13px;font-family:'Liberation Serif',serif;font-size:18.00px;font-weight:700;color:#141414;transform:scale(1.0526,1.0000);transform-origin:0 15.07px;letter-spacing:1.20px;-webkit-text-stroke:0.2px #141414;">in.</div>
<div class="r" style="left:-6.00px;top:690.00px;width:191.50px;height:45.00px;background:#f0f0f0;border:1.5px solid #bdbdbd;border-radius:0 0 6px 0;box-sizing:border-box;box-shadow:0 4px 8px rgba(0,0,0,0.10);"></div>
<svg class="r" style="left:82.00px;top:694.00px;" width="88.00" height="22.00" viewBox="0 0 88 22" preserveAspectRatio="none"><path d="M2,4 L6,20 M8,2 L8,20 M4,8 L14,8" stroke="#333" stroke-width="3"/><rect x="16" y="10" width="24" height="8" fill="#555"/><path d="M52,4 L64,18 M52,18 L62,6" stroke="#333" stroke-width="3"/><polygon points="74,8 87,8 80.5,18" fill="#333"/></svg>
<div class="r" style="left:-8.00px;top:410.00px;width:323.00px;height:282.00px;background:#f2f2f2;border:1.5px solid #bbbbbb;border-radius:6px;box-sizing:border-box;box-shadow:0 6px 14px rgba(0,0,0,0.16),0 1px 3px rgba(0,0,0,0.10);"></div>
<div class="t" style="left:-2.29px;top:423.89px;font-family:'Liberation Sans',sans-serif;font-size:28.00px;color:#161616;transform:scale(1.0187,1.0000);transform-origin:0 23.71px;">Bolds</div>
<svg class="r" style="left:289.00px;top:432.00px;" width="11.00" height="16.00" viewBox="0 0 11 16" preserveAspectRatio="none"><polyline points="2,1.5 9,8.0 2,14.5" fill="none" stroke="#555" stroke-width="2.8"/></svg>
<svg class="r" style="left:-4.00px;top:466.00px;" width="24.00" height="31.00" viewBox="0 0 24 31" preserveAspectRatio="none"><path d="M1,6 Q1,1 7,1 H14 Q19,1 19,7 V27 Q19,29 17,29 H1 Z" fill="#667a94" stroke="#2a3b52" stroke-width="2"/><rect x="1" y="9" width="9" height="19" fill="#a9cdee"/><rect x="5" y="16" width="6" height="10" fill="#f4f6f8"/><path d="M3,5 H17" stroke="#c9def2" stroke-width="2"/><rect x="12" y="10" width="5" height="5" fill="#d8e8f6"/></svg>
<div class="t" style="left:30.96px;top:467.29px;font-family:'Liberation Sans',sans-serif;font-size:28.00px;color:#161616;transform:scale(1.0176,1.0000);transform-origin:0 23.71px;">Underlirle</div>
<svg class="r" style="left:289.00px;top:474.50px;" width="11.00" height="15.50" viewBox="0 0 11 15.5" preserveAspectRatio="none"><polyline points="2,1.5 9,7.8 2,14.0" fill="none" stroke="#555" stroke-width="2.8"/></svg>
<div class="r" style="left:-6.00px;top:506.60px;width:317.00px;height:48.40px;background:linear-gradient(90deg,#c4daf1,#cfe1f4 60%,#c9ddf2);border:1.5px solid #a6c3e3;border-radius:4px;box-sizing:border-box;"></div>
<svg class="r" style="left:-4.00px;top:514.00px;" width="24.00" height="31.00" viewBox="0 0 24 31" preserveAspectRatio="none"><path d="M1,6 Q1,1 7,1 H14 Q19,1 19,7 V27 Q19,29 17,29 H1 Z" fill="#667a94" stroke="#2a3b52" stroke-width="2"/><rect x="1" y="9" width="9" height="19" fill="#a9cdee"/><rect x="5" y="16" width="6" height="10" fill="#f4f6f8"/><path d="M3,5 H17" stroke="#c9def2" stroke-width="2"/><rect x="12" y="10" width="5" height="5" fill="#d8e8f6"/></svg>
<div class="t" style="left:36.20px;top:517.29px;font-family:'Liberation Sans',sans-serif;font-size:28.00px;color:#161616;transform:scale(1.0488,1.0000);transform-origin:0 23.71px;">Underlinae</div>
<svg class="r" style="left:-4.00px;top:562.00px;" width="24.00" height="31.00" viewBox="0 0 24 31" preserveAspectRatio="none"><path d="M1,6 Q1,1 7,1 H14 Q19,1 19,7 V27 Q19,29 17,29 H1 Z" fill="#667a94" stroke="#2a3b52" stroke-width="2"/><rect x="1" y="9" width="9" height="19" fill="#a9cdee"/><rect x="5" y="16" width="6" height="10" fill="#f4f6f8"/><path d="M3,5 H17" stroke="#c9def2" stroke-width="2"/><rect x="12" y="10" width="5" height="5" fill="#d8e8f6"/></svg>
<div class="t" style="left:34.00px;top:565.69px;font-family:'Liberation Sans',sans-serif;font-size:28.00px;color:#161616;transform:scale(0.9507,1.0000);transform-origin:0 23.71px;">Amges</div>
<svg class="r" style="left:289.00px;top:573.00px;" width="11.00" height="16.40" viewBox="0 0 11 16.4" preserveAspectRatio="none"><polyline points="2,1.5 9,8.2 2,14.9" fill="none" stroke="#555" stroke-width="2.8"/></svg>
<svg class="r" style="left:-4.00px;top:606.00px;" width="24.00" height="32.00" viewBox="0 0 24 32" preserveAspectRatio="none"><rect x="1" y="9" width="17" height="21" fill="#ececec" stroke="#555" stroke-width="2"/><path d="M4,9 C6,3 10,2 12,6 C14,2 17,4 16,9" stroke="#d89050" stroke-width="2.5" fill="#f0d0a0"/><path d="M4,16 H16 M4,21 H16" stroke="#aaa" stroke-width="1"/></svg>
<div class="t" style="left:34.86px;top:609.29px;font-family:'Liberation Sans',sans-serif;font-size:28.00px;color:#161616;transform:scale(0.9524,1.0000);transform-origin:0 23.71px;">Forrtobors</div>
<svg class="r" style="left:289.00px;top:616.00px;" width="11.00" height="17.00" viewBox="0 0 11 17" preserveAspectRatio="none"><polyline points="2,1.5 9,8.5 2,15.5" fill="none" stroke="#555" stroke-width="2.8"/></svg>
<div class="t" style="left:16.03px;top:650.68px;font-family:'Liberation Sans',sans-serif;font-size:24.00px;color:#3a3a3a;transform:scale(0.8976,1.0000);transform-origin:0 20.32px;">Fenyy</div>
<div class="t" style="left:83.66px;top:662.69px;font-family:'Liberation Sans',sans-serif;font-size:11.00px;color:#333;transform:scale(1.3506,1.0000);transform-origin:0 9.31px;">ewn</div>
<div class="r" style="left:118.00px;top:669.50px;width:188.00px;height:1.50px;background:#c6c6c6;"></div>
<div class="r" style="left:-8.00px;top:928.60px;width:172.00px;height:457.40px;background:#f2f2f2;border:1.5px solid #bbbbbb;border-radius:6px;box-sizing:border-box;box-shadow:0 6px 14px rgba(0,0,0,0.16),0 1px 3px rgba(0,0,0,0.10);"></div>
<div class="t" style="left:-1.41px;top:937.29px;font-family:'Liberation Sans',sans-serif;font-size:28.00px;color:#161616;transform:scale(0.8030,1.0000);transform-origin:0 23.71px;">rmeni</div>
<svg class="r" style="left:132.00px;top:947.00px;" width="16.00" height="10.00" viewBox="0 0 16 10" preserveAspectRatio="none"><polyline points="1.5,9.0 8.0,2 14.5,9.0" fill="none" stroke="#333" stroke-width="2.6"/></svg>
<div class="r" style="left:0.00px;top:974.70px;width:158.00px;height:1.50px;background:#cdcdcd;"></div>
<div class="t" style="left:-1.11px;top:983.29px;font-family:'Liberation Sans',sans-serif;font-size:28.00px;color:#161616;transform:scale(0.8871,1.0000);transform-origin:0 23.71px;">Srfonan</div>
<svg class="r" style="left:115.00px;top:994.00px;" width="30.00" height="12.00" viewBox="0 0 30 12" preserveAspectRatio="none"><polygon points="1,2 11,2 6,11" fill="#333"/><polyline points="16,10 22,3 28,10" fill="none" stroke="#333" stroke-width="2.6"/></svg>
<div class="r" style="left:0.00px;top:1019.00px;width:158.00px;height:1.50px;background:#cdcdcd;"></div>
<div class="t" style="left:-0.71px;top:1035.29px;font-family:'Liberation Sans',sans-serif;font-size:28.00px;color:#161616;transform:scale(0.9457,1.0000);transform-origin:0 23.71px;">Znlt</div>
<svg class="r" style="left:128.00px;top:1045.00px;" width="20.00" height="14.00" viewBox="0 0 20 14" preserveAspectRatio="none"><polyline points="2,2 8,7 2,12" fill="none" stroke="#555" stroke-width="2.4"/><polyline points="10,2 16,7 10,12" fill="none" stroke="#555" stroke-width="2.4"/></svg>
<div class="t" style="left:-0.89px;top:1076.29px;font-family:'Liberation Sans',sans-serif;font-size:28.00px;color:#161616;transform:scale(0.8922,1.0000);transform-origin:0 23.71px;">cheare</div>
<div class="r" style="left:0.00px;top:1115.00px;width:158.00px;height:1.50px;background:#cdcdcd;"></div>
<div class="t" style="left:-0.24px;top:1123.29px;font-family:'Liberation Sans',sans-serif;font-size:28.00px;color:#161616;transform:scale(0.9793,1.0000);transform-origin:0 23.71px;">tiom</div>
<svg class="r" style="left:99.00px;top:1133.00px;" width="11.00" height="15.00" viewBox="0 0 11 15" preserveAspectRatio="none"><polyline points="2,1.5 9,7.5 2,13.5" fill="none" stroke="#555" stroke-width="2.8"/></svg>
<div class="r" style="left:129.50px;top:1125.00px;width:1.50px;height:26.00px;background:#888;"></div>
<svg class="r" style="left:99.00px;top:1170.00px;" width="11.00" height="17.00" viewBox="0 0 11 17" preserveAspectRatio="none"><polyline points="2,1.5 9,8.5 2,15.5" fill="none" stroke="#555" stroke-width="2.8"/></svg>
<svg class="r" style="left:94.00px;top:1221.00px;" width="16.00" height="10.00" viewBox="0 0 16 10" preserveAspectRatio="none"><polyline points="1.5,9.0 8.0,2 14.5,9.0" fill="none" stroke="#333" stroke-width="2.6"/></svg>
<div class="r" style="left:0.00px;top:1245.00px;width:158.00px;height:1.50px;background:#cdcdcd;"></div>
<div class="t" style="left:-1.10px;top:1254.29px;font-family:'Liberation Sans',sans-serif;font-size:28.00px;color:#161616;transform:scale(0.8828,1.0000);transform-origin:0 23.71px;">Cnt</div>
<svg class="r" style="left:94.00px;top:1260.00px;" width="16.00" height="10.00" viewBox="0 0 16 10" preserveAspectRatio="none"><polyline points="1.5,9.0 8.0,2 14.5,9.0" fill="none" stroke="#333" stroke-width="2.6"/></svg>
<div class="r" style="left:-4.00px;top:1293.00px;width:116.00px;height:44.00px;background:#e0e0e0;border-top:1.5px solid #cfcfcf;border-bottom:1.5px solid #d4d4d4;box-sizing:border-box;"></div>
<svg class="r" style="left:-2.00px;top:1302.00px;" width="12.00" height="30.00" viewBox="0 0 12 30" preserveAspectRatio="none"><rect x="-4" y="2" width="14" height="26" rx="2" fill="#a9c9ea" stroke="#2c4a6e" stroke-width="2"/></svg>
<div class="t" style="left:43.00px;top:1302.29px;font-family:'Liberation Sans',sans-serif;font-size:28.00px;color:#161616;transform:scale(1.0046,1.0000);transform-origin:0 23.71px;">Table</div>
<svg class="r" style="left:-2.00px;top:1347.00px;" width="12.00" height="31.00" viewBox="0 0 12 31" preserveAspectRatio="none"><rect x="-4" y="3" width="14" height="26" rx="2" fill="#a9c9ea" stroke="#2c4a6e" stroke-width="2"/></svg>
<div class="t" style="left:26.21px;top:1347.29px;font-family:'Liberation Sans',sans-serif;font-size:28.00px;color:#222;transform:scale(0.8740,1.0000);transform-origin:0 23.71px;">S4B3</div>
<svg class="r" style="left:100.00px;top:1355.00px;" width="9.00" height="13.00" viewBox="0 0 9 13" preserveAspectRatio="none"><polygon points="0,0 9,6.5 0,13.0" fill="#444"/></svg>
<div class="r" style="left:-8.00px;top:1677.00px;width:119.00px;height:309.00px;background:#f2f2f2;border:1.5px solid #bbbbbb;border-radius:0 6px 0 0;box-sizing:border-box;"></div>
<div class="t" style="left:-0.79px;top:1705.29px;font-family:'Liberation Sans',sans-serif;font-size:28.00px;color:#161616;transform:scale(0.7895,1.0000);transform-origin:0 23.71px;">amtier</div>
<svg class="r" style="left:94.00px;top:1717.00px;" width="14.00" height="10.00" viewBox="0 0 14 10" preserveAspectRatio="none"><polyline points="1.5,9.0 7.0,2 12.5,9.0" fill="none" stroke="#333" stroke-width="2.6"/></svg>
<div class="r" style="left:0.00px;top:1742.00px;width:108.00px;height:1.50px;background:#cdcdcd;"></div>
<div class="t" style="left:0.00px;top:1751.79px;font-family:'Liberation Sans',sans-serif;font-size:28.00px;color:#161616;transform:scale(0.8707,1.0000);transform-origin:0 23.71px;">vmisst</div>
<div class="t" style="left:-0.23px;top:1790.29px;font-family:'Liberation Sans',sans-serif;font-size:28.00px;color:#222;transform:scale(0.9004,1.0000);transform-origin:0 23.71px;">xrios</div>
<svg class="r" style="left:94.00px;top:1801.00px;" width="14.00" height="10.00" viewBox="0 0 14 10" preserveAspectRatio="none"><polyline points="1.5,9.0 7.0,2 12.5,9.0" fill="none" stroke="#333" stroke-width="2.6"/></svg>
<div class="r" style="left:0.00px;top:1830.00px;width:108.00px;height:1.50px;background:#cdcdcd;"></div>
<div class="t" style="left:0.00px;top:1837.99px;font-family:'Liberation Sans',sans-serif;font-size:28.00px;color:#161616;transform:scale(0.9389,1.0000);transform-origin:0 23.71px;">y Tocs</div>
<svg class="r" style="left:94.00px;top:1848.00px;" width="14.00" height="10.00" viewBox="0 0 14 10" preserveAspectRatio="none"><polyline points="1.5,9.0 7.0,2 12.5,9.0" fill="none" stroke="#333" stroke-width="2.6"/></svg>
<div class="r" style="left:-4.00px;top:1876.00px;width:124.60px;height:94.00px;background:#e2e2e2;border-top:1.5px solid #cfcfcf;border-right:1.5px solid #cfcfcf;box-sizing:border-box;"></div>
<div class="t" style="left:-0.59px;top:1881.29px;font-family:'Liberation Sans',sans-serif;font-size:28.00px;color:#222;transform:scale(0.7815,1.0000);transform-origin:0 23.71px;">smdnt</div>
<svg class="r" style="left:99.00px;top:1895.00px;" width="13.00" height="13.00" viewBox="0 0 13 13" preserveAspectRatio="none"><polygon points="0,1 13,1 6.5,12" fill="#333"/></svg>
<div class="t" style="left:-1.79px;top:1920.29px;font-family:'Liberation Sans',sans-serif;font-size:28.00px;color:#222;transform:scale(1.0213,1.0000);transform-origin:0 23.71px;">rtiure</div>
<svg class="r" style="left:99.00px;top:1935.00px;" width="13.00" height="13.00" viewBox="0 0 13 13" preserveAspectRatio="none"><polygon points="0,1 13,1 6.5,12" fill="#333"/></svg>
<div class="r" style="left:-4.00px;top:1970.00px;width:124.60px;height:16.00px;background:#f0f0f0;border-right:1.5px solid #cfcfcf;box-sizing:border-box;"></div>
<div class="t" style="left:46.23px;top:1968.76px;font-family:'Liberation Sans',sans-serif;font-size:18.00px;color:#888;transform:scale(1.5484,1.0000);transform-origin:0 15.24px;">z</div>
<div class="r" style="left:111.40px;top:1151.00px;width:339.20px;height:745.00px;background:#f2f2f2;border:1.5px solid #bbbbbb;border-radius:6px;box-sizing:border-box;box-shadow:0 6px 14px rgba(0,0,0,0.16),0 1px 3px rgba(0,0,0,0.10);"></div>
<div class="t" style="left:177.57px;top:1166.29px;font-family:'Liberation Sans',sans-serif;font-size:28.00px;color:#161616;transform:scale(1.0779,1.0000);transform-origin:0 23.71px;">Foritet</div>
<div class="t" style="left:177.79px;top:1208.79px;font-family:'Liberation Sans',sans-serif;font-size:28.00px;color:#161616;transform:scale(0.9820,1.0000);transform-origin:0 23.71px;">Fecciperp</div>
<div class="t" style="left:177.70px;top:1252.29px;font-family:'Liberation Sans',sans-serif;font-size:28.00px;color:#161616;transform:scale(1.0230,1.0000);transform-origin:0 23.71px;">Bullet Points</div>
<div class="r" style="left:115.50px;top:1290.00px;width:331.50px;height:50.00px;background:linear-gradient(90deg,#c4daf1,#cfe1f4 60%,#c9ddf2);border:1.5px solid #a6c3e3;border-radius:4px;box-sizing:border-box;"></div>
<div class="t" style="left:177.63px;top:1300.29px;font-family:'Liberation Sans',sans-serif;font-size:28.00px;color:#161616;transform:scale(1.0555,1.0000);transform-origin:0 23.71px;">Fargiapont</div>
<svg class="r" style="left:423.00px;top:1308.00px;" width="9.00" height="14.00" viewBox="0 0 9 14" preserveAspectRatio="none"><polygon points="0,0 9,7.0 0,14.0" fill="#333"/></svg>
<div class="t" style="left:177.46px;top:1349.79px;font-family:'Liberation Sans',sans-serif;font-size:28.00px;color:#161616;transform:scale(1.1309,1.0000);transform-origin:0 23.71px;">Number</div>
<div class="r" style="left:121.00px;top:1391.00px;width:319.00px;height:1.50px;background:#cdcdcd;"></div>
<div class="t" style="left:178.74px;top:1405.29px;font-family:'Liberation Sans',sans-serif;font-size:28.00px;color:#161616;transform:scale(1.0083,1.0000);transform-origin:0 23.71px;">Spont</div>
<div class="t" style="left:178.77px;top:1448.29px;font-family:'Liberation Sans',sans-serif;font-size:28.00px;color:#161616;transform:scale(0.9860,1.0000);transform-origin:0 23.71px;">Sirle</div>
<svg class="r" style="left:423.00px;top:1457.00px;" width="11.00" height="15.00" viewBox="0 0 11 15" preserveAspectRatio="none"><polyline points="2,1.5 9,7.5 2,13.5" fill="none" stroke="#555" stroke-width="2.8"/></svg>
<div class="t" style="left:178.62px;top:1490.29px;font-family:'Liberation Sans',sans-serif;font-size:28.00px;color:#161616;transform:scale(1.1022,1.0000);transform-origin:0 23.71px;">Olretr</div>
<svg class="r" style="left:423.00px;top:1497.00px;" width="11.00" height="16.60" viewBox="0 0 11 16.6" preserveAspectRatio="none"><polyline points="2,1.5 9,8.3 2,15.1" fill="none" stroke="#555" stroke-width="2.8"/></svg>
<div class="t" style="left:179.50px;top:1533.79px;font-family:'Liberation Sans',sans-serif;font-size:28.00px;color:#161616;">Tolics</div>
<svg class="r" style="left:423.00px;top:1540.70px;" width="11.00" height="15.90" viewBox="0 0 11 15.9" preserveAspectRatio="none"><polyline points="2,1.5 9,7.9 2,14.4" fill="none" stroke="#555" stroke-width="2.8"/></svg>
<div class="t" style="left:178.83px;top:1575.29px;font-family:'Liberation Sans',sans-serif;font-size:28.00px;color:#333;transform:scale(0.9376,1.0000);transform-origin:0 23.71px;">Codeis</div>
<svg class="r" style="left:134.00px;top:1532.00px;" width="28.00" height="31.00" viewBox="0 0 28 31" preserveAspectRatio="none"><rect x="1.5" y="1.5" width="25.0" height="28.0" fill="#f4f6f9" stroke="#4a5a78" stroke-width="2"/><path d="M6,10.8 H22.0 M6,17.1 H20.0 M6,23.2 H22.0" stroke="#8a94a6" stroke-width="1.5"/></svg>
<svg class="r" style="left:132.00px;top:1571.00px;" width="33.00" height="34.00" viewBox="0 0 33 34" preserveAspectRatio="none"><rect x="2" y="8" width="26" height="20" rx="2" fill="#7f93b3" stroke="#3a4a66" stroke-width="2"/><rect x="6" y="3" width="14" height="6" fill="#555"/><path d="M14,30 L30,14 L32,32 Z" fill="#5aa6de" stroke="#2d6ea8" stroke-width="1.5"/></svg>
<div class="r" style="left:121.00px;top:1617.00px;width:319.00px;height:1.50px;background:#cdcdcd;"></div>
<div class="t" style="left:177.80px;top:1627.29px;font-family:'Liberation Sans',sans-serif;font-size:28.00px;color:#161616;transform:scale(0.9772,1.0000);transform-origin:0 23.71px;">Moiness</div>
<div class="t" style="left:177.77px;top:1670.29px;font-family:'Liberation Sans',sans-serif;font-size:28.00px;color:#161616;transform:scale(0.9925,1.0000);transform-origin:0 23.71px;">Mertbri LTIST</div>
<div class="t" style="left:177.68px;top:1713.99px;font-family:'Liberation Sans',sans-serif;font-size:28.00px;color:#161616;transform:scale(1.0314,1.0000);transform-origin:0 23.71px;">Folliations</div>
<div class="r" style="left:121.00px;top:1754.00px;width:321.00px;height:1.50px;background:#cdcdcd;"></div>
<div class="t" style="left:177.72px;top:1767.29px;font-family:'Liberation Sans',sans-serif;font-size:28.00px;color:#161616;transform:scale(1.0147,1.0000);transform-origin:0 23.71px;">Flocusont</div>
<div class="t" style="left:177.78px;top:1810.29px;font-family:'Liberation Sans',sans-serif;font-size:28.00px;color:#161616;transform:scale(0.9859,1.0000);transform-origin:0 23.71px;">Mgrtirdont</div>
<div class="t" style="left:177.81px;top:1853.79px;font-family:'Liberation Sans',sans-serif;font-size:28.00px;color:#161616;transform:scale(0.9749,1.0000);transform-origin:0 23.71px;">Maller Coiniete</div>
<svg class="r" style="left:133.00px;top:1856.00px;" width="32.00" height="29.00" viewBox="0 0 32 29" preserveAspectRatio="none"><rect x="1.5" y="1.5" width="29" height="26" fill="#62a8e6" stroke="#2f6fb0" stroke-width="2"/><rect x="4" y="4" width="24" height="7" fill="#cfe4f7"/><path d="M8,18 H22 M8,23 H18" stroke="#2f6fb0" stroke-width="1.5"/></svg>
<svg class="r" style="left:322.00px;top:1170.00px;" width="38.00" height="56.00" viewBox="0 0 38 56" preserveAspectRatio="none"><path d="M4,2 L4,46 L14,36 L22,53 L29,50 L21,33 L35,33 Z" fill="#fafafa" stroke="#111" stroke-width="2.6" stroke-linejoin="round"/></svg>
<div class="r" style="left:617.70px;top:942.80px;width:359.30px;height:960.20px;background:#f2f2f2;border:1.5px solid #bbbbbb;border-radius:6px;box-sizing:border-box;box-shadow:0 6px 14px rgba(0,0,0,0.16),0 1px 3px rgba(0,0,0,0.10);"></div>
<div class="t" style="left:684.53px;top:958.99px;font-family:'Liberation Sans',sans-serif;font-size:28.00px;color:#161616;transform:scale(1.0068,1.0000);transform-origin:0 23.71px;">Pargrons</div>
<div class="t" style="left:684.30px;top:1003.09px;font-family:'Liberation Sans',sans-serif;font-size:28.00px;color:#161616;transform:scale(1.1126,1.0000);transform-origin:0 23.71px;">Boltt</div>
<svg class="r" style="left:950.00px;top:1008.00px;" width="11.00" height="17.00" viewBox="0 0 11 17" preserveAspectRatio="none"><polyline points="2,1.5 9,8.5 2,15.5" fill="none" stroke="#555" stroke-width="2.8"/></svg>
<div class="t" style="left:685.62px;top:1047.79px;font-family:'Liberation Sans',sans-serif;font-size:28.00px;color:#161616;transform:scale(0.9435,1.0000);transform-origin:0 23.71px;">Size</div>
<svg class="r" style="left:950.00px;top:1054.00px;" width="11.00" height="17.00" viewBox="0 0 11 17" preserveAspectRatio="none"><polyline points="2,1.5 9,8.5 2,15.5" fill="none" stroke="#555" stroke-width="2.8"/></svg>
<div class="t" style="left:684.45px;top:1101.29px;font-family:'Liberation Sans',sans-serif;font-size:28.00px;color:#161616;transform:scale(1.0459,1.0000);transform-origin:0 23.71px;">Bullet Points</div>
<div class="t" style="left:686.26px;top:1152.59px;font-family:'Liberation Sans',sans-serif;font-size:28.00px;color:#161616;transform:scale(1.0767,1.0000);transform-origin:0 23.71px;">Targetfeling</div>
<svg class="r" style="left:950.00px;top:1160.00px;" width="11.00" height="17.00" viewBox="0 0 11 17" preserveAspectRatio="none"><polyline points="2,1.5 9,8.5 2,15.5" fill="none" stroke="#555" stroke-width="2.8"/></svg>
<div class="t" style="left:684.64px;top:1196.69px;font-family:'Liberation Sans',sans-serif;font-size:28.00px;color:#161616;transform:scale(0.9589,1.0000);transform-origin:0 23.71px;">Eimges</div>
<div class="t" style="left:685.34px;top:1287.79px;font-family:'Liberation Sans',sans-serif;font-size:28.00px;color:#161616;transform:scale(1.1659,1.0000);transform-origin:0 23.71px;">Oluls</div>
<svg class="r" style="left:950.00px;top:1294.40px;" width="11.00" height="17.10" viewBox="0 0 11 17.1" preserveAspectRatio="none"><polyline points="2,1.5 9,8.5 2,15.6" fill="none" stroke="#555" stroke-width="2.8"/></svg>
<div class="t" style="left:684.62px;top:1333.29px;font-family:'Liberation Sans',sans-serif;font-size:28.00px;color:#161616;transform:scale(0.9671,1.0000);transform-origin:0 23.71px;">Miane</div>
<svg class="r" style="left:950.00px;top:1340.00px;" width="11.00" height="17.00" viewBox="0 0 11 17" preserveAspectRatio="none"><polyline points="2,1.5 9,8.5 2,15.5" fill="none" stroke="#555" stroke-width="2.8"/></svg>
<div class="t" style="left:685.56px;top:1377.29px;font-family:'Liberation Sans',sans-serif;font-size:28.00px;color:#161616;transform:scale(0.9898,1.0000);transform-origin:0 23.71px;">Sirle</div>
<svg class="r" style="left:950.00px;top:1384.00px;" width="11.00" height="17.00" viewBox="0 0 11 17" preserveAspectRatio="none"><polyline points="2,1.5 9,8.5 2,15.5" fill="none" stroke="#555" stroke-width="2.8"/></svg>
<div class="r" style="left:627.00px;top:1087.40px;width:340.00px;height:1.50px;background:#cdcdcd;"></div>
<div class="r" style="left:627.00px;top:1239.00px;width:340.00px;height:1.50px;background:#cdcdcd;"></div>
<div class="r" style="left:627.00px;top:1273.00px;width:340.00px;height:1.50px;background:#cdcdcd;"></div>
<svg class="r" style="left:637.00px;top:1288.00px;" width="32.00" height="28.00" viewBox="0 0 32 28" preserveAspectRatio="none"><path d="M2,4 H12 L14,6 H30 V26 H2 Z" fill="#f4f4f4" stroke="#34445e" stroke-width="2.2"/><rect x="9" y="6" width="3" height="12" fill="#222"/><rect x="8" y="20" width="5" height="3" fill="#333"/><path d="M16,15 H27 M14,22 H27" stroke="#888" stroke-width="1.2" stroke-dasharray="2,2"/></svg>
<svg class="r" style="left:638.00px;top:1330.00px;" width="30.00" height="32.00" viewBox="0 0 30 32" preserveAspectRatio="none"><path d="M2,2 H22 L28,8 V30 H2 Z" fill="#f2f2f2" stroke="#34445e" stroke-width="2.2"/><path d="M8,8 H24 M10,8 V26 M20,8 V14" stroke="#333" stroke-width="2" fill="none"/><rect x="11" y="15" width="8" height="6" fill="none" stroke="#444" stroke-width="1.5"/><path d="M8,26 H24" stroke="#666" stroke-width="1.2"/></svg>
<div class="r" style="left:621.00px;top:1416.80px;width:352.00px;height:49.90px;background:linear-gradient(90deg,#c4daf1,#cfe1f4 60%,#c9ddf2);border:1.5px solid #a6c3e3;border-radius:4px;box-sizing:border-box;"></div>
<svg class="r" style="left:636.00px;top:1426.00px;" width="34.00" height="32.00" viewBox="0 0 34 32" preserveAspectRatio="none"><path d="M2,3 H24 L32,11 V30 H2 Z" fill="#f4f4f4" stroke="#34445e" stroke-width="2.2"/><path d="M24,3 V11 H32 Z" fill="#8fb5d8" stroke="#34445e" stroke-width="1.5"/><path d="M5,11 H24" stroke="#999" stroke-width="1"/><path d="M6,24 C10,21 14,26 18,23 C22,21 25,25 29,22" stroke="#333" stroke-width="2" fill="none"/></svg>
<div class="t" style="left:686.80px;top:1427.29px;font-family:'Liberation Sans',sans-serif;font-size:28.00px;color:#161616;transform:scale(1.0459,1.0000);transform-origin:0 23.71px;">Angunge My(3etms)</div>
<svg class="r" style="left:636.00px;top:1478.00px;" width="34.00" height="28.00" viewBox="0 0 34 28" preserveAspectRatio="none"><path d="M2,7 H11 C12,3 22,3 23,7 H32 V26 H2 Z" fill="#eef2f7" stroke="#3a4f70" stroke-width="2.2"/><path d="M6,13 H28 M6,17 H28 M6,21 H28" stroke="#9aa6b8" stroke-width="1.2"/></svg>
<div class="t" style="left:685.52px;top:1479.19px;font-family:'Liberation Sans',sans-serif;font-size:28.00px;color:#161616;transform:scale(1.0244,1.0000);transform-origin:0 23.71px;">Stats</div>
<div class="r" style="left:621.00px;top:1520.70px;width:352.00px;height:49.30px;background:linear-gradient(90deg,#c4daf1,#cfe1f4 60%,#c9ddf2);border:1.5px solid #a6c3e3;border-radius:4px;box-sizing:border-box;"></div>
<svg class="r" style="left:639.00px;top:1527.00px;" width="28.00" height="34.00" viewBox="0 0 28 34" preserveAspectRatio="none"><rect x="2" y="2" width="24" height="30" fill="#efefef" stroke="#2a2a2a" stroke-width="2.4"/><rect x="5" y="5" width="10" height="5" fill="#444"/><path d="M5,13 H23 M5,17 H23 M5,21 H23 M5,25 H21" stroke="#888" stroke-width="1.3"/></svg>
<div class="t" style="left:684.39px;top:1528.60px;font-family:'Liberation Sans',sans-serif;font-size:30.00px;color:#161616;transform:scale(1.0704,1.0000);transform-origin:0 25.40px;">Mumber</div>
<svg class="r" style="left:951.00px;top:1540.00px;" width="9.00" height="11.00" viewBox="0 0 9 11" preserveAspectRatio="none"><polygon points="0,0 9,5.5 0,11.0" fill="#333"/></svg>
<div class="t" style="left:684.51px;top:1582.29px;font-family:'Liberation Sans',sans-serif;font-size:28.00px;color:#161616;transform:scale(1.0166,1.0000);transform-origin:0 23.71px;">Fortuee</div>
<svg class="r" style="left:950.00px;top:1590.00px;" width="11.00" height="15.00" viewBox="0 0 11 15" preserveAspectRatio="none"><polyline points="2,1.5 9,7.5 2,13.5" fill="none" stroke="#555" stroke-width="2.8"/></svg>
<div class="t" style="left:686.31px;top:1627.99px;font-family:'Liberation Sans',sans-serif;font-size:28.00px;color:#161616;transform:scale(0.9810,1.0000);transform-origin:0 23.71px;">Tiernde</div>
<svg class="r" style="left:950.00px;top:1635.00px;" width="11.00" height="15.50" viewBox="0 0 11 15.5" preserveAspectRatio="none"><polyline points="2,1.5 9,7.8 2,14.0" fill="none" stroke="#555" stroke-width="2.8"/></svg>
<div class="t" style="left:685.53px;top:1673.29px;font-family:'Liberation Sans',sans-serif;font-size:28.00px;color:#161616;transform:scale(1.0189,1.0000);transform-origin:0 23.71px;">Conttels</div>
<svg class="r" style="left:950.00px;top:1680.00px;" width="11.00" height="15.70" viewBox="0 0 11 15.7" preserveAspectRatio="none"><polyline points="2,1.5 9,7.9 2,14.2" fill="none" stroke="#555" stroke-width="2.8"/></svg>
<div class="t" style="left:686.32px;top:1717.29px;font-family:'Liberation Sans',sans-serif;font-size:28.00px;color:#161616;transform:scale(0.9673,1.0000);transform-origin:0 23.71px;">Xmabmy</div>
<svg class="r" style="left:950.00px;top:1724.00px;" width="11.00" height="17.00" viewBox="0 0 11 17" preserveAspectRatio="none"><polyline points="2,1.5 9,8.5 2,15.5" fill="none" stroke="#555" stroke-width="2.8"/></svg>
<div class="t" style="left:686.80px;top:1762.29px;font-family:'Liberation Sans',sans-serif;font-size:28.00px;color:#161616;transform:scale(0.9960,1.0000);transform-origin:0 23.71px;">Accomnte</div>
<svg class="r" style="left:950.00px;top:1769.50px;" width="11.00" height="15.50" viewBox="0 0 11 15.5" preserveAspectRatio="none"><polyline points="2,1.5 9,7.8 2,14.0" fill="none" stroke="#555" stroke-width="2.8"/></svg>
<div class="r" style="left:625.00px;top:1804.50px;width:343.00px;height:1.50px;background:#cdcdcd;"></div>
<svg class="r" style="left:640.00px;top:1815.00px;" width="29.00" height="32.00" viewBox="0 0 29 32" preserveAspectRatio="none"><rect x="1.5" y="9" width="26" height="21" fill="#7aa6d6" stroke="#2d5f9a" stroke-width="2"/><rect x="5" y="13" width="19" height="13" fill="#e9eef5"/><ellipse cx="14" cy="6" rx="7" ry="5" fill="#b0902a"/></svg>
<div class="t" style="left:685.52px;top:1818.29px;font-family:'Liberation Sans',sans-serif;font-size:28.00px;color:#161616;transform:scale(1.0264,1.0000);transform-origin:0 23.71px;">Cormunt</div>
<svg class="r" style="left:639.00px;top:1861.00px;" width="29.00" height="30.00" viewBox="0 0 29 30" preserveAspectRatio="none"><path d="M1.5,1.5 H18.0 L27.5,9.0 V28.5 H1.5 Z" fill="#e6e4f2" stroke="#4a4f78" stroke-width="2"/><path d="M6,22.5 H23.0" stroke="#8a8a8a" stroke-width="1.5"/></svg>
<div class="t" style="left:684.71px;top:1861.29px;font-family:'Liberation Sans',sans-serif;font-size:28.00px;color:#161616;transform:scale(1.0473,1.0000);transform-origin:0 23.71px;">Underlice</div>
</body></html>
